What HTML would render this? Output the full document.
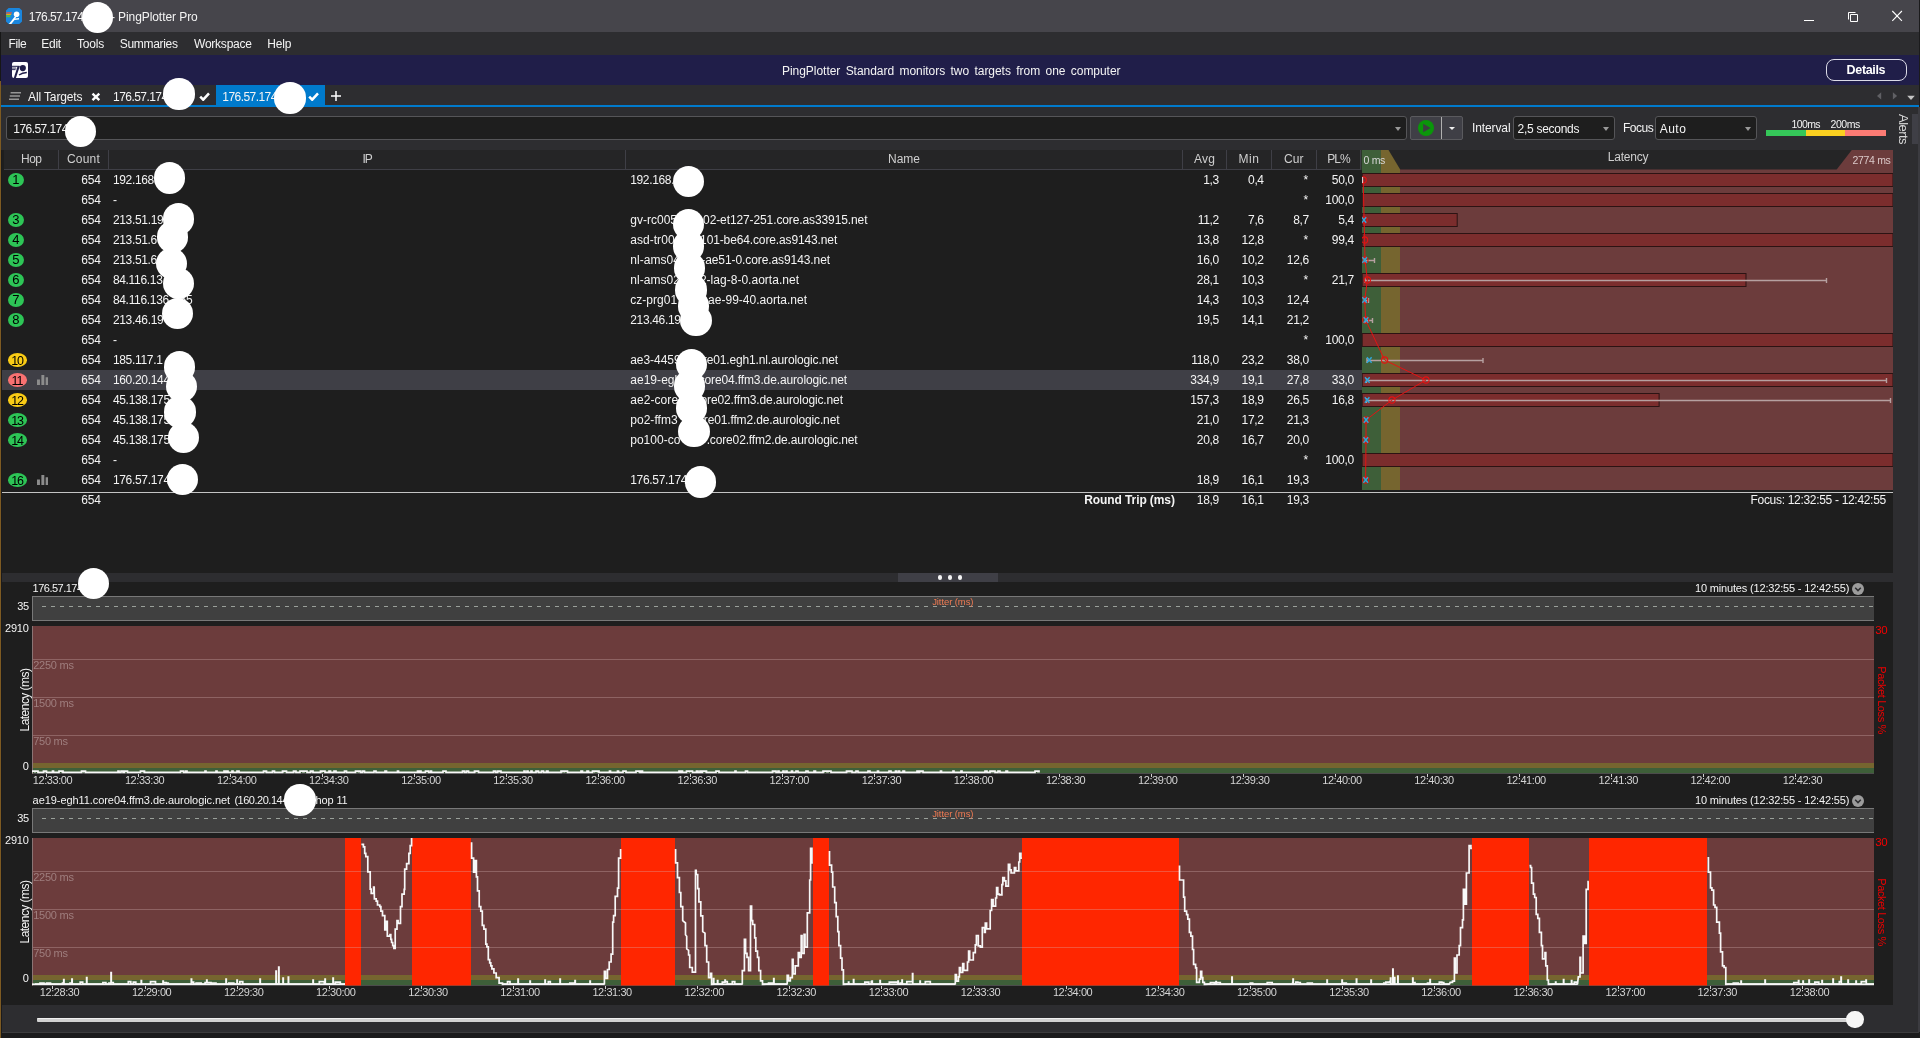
<!DOCTYPE html>
<html><head><meta charset="utf-8"><title>PingPlotter Pro</title>
<style>
*{box-sizing:border-box;margin:0;padding:0}
html,body{width:1920px;height:1038px;overflow:hidden;background:#1e1e1e}
body{font-family:"Liberation Sans",sans-serif;font-size:12px;color:#f4f4f4;position:relative}
.a{position:absolute;white-space:nowrap}
.t{position:absolute;white-space:pre;line-height:14px;height:14px}
.blob{position:absolute;background:#fff;border-radius:50%}
.hop{position:absolute;height:16px;border-radius:8px;color:#000;text-align:center;line-height:16px;font-size:13px}
.hg{background:#2dc556}.hy{background:#facc15}.hr{background:#f87171}
.combo{position:absolute;top:116px;height:24px;background:#1e1e1e;border:1px solid #555558;border-radius:3px}
.arr{position:absolute;width:0;height:0;border-left:3.5px solid transparent;border-right:3.5px solid transparent;border-top:4px solid #999}
</style></head><body><div id="app" style="position:absolute;left:0;top:0;width:1920px;height:1038px;will-change:transform">

<div class="a" style="left:0px;top:0px;width:1919px;height:32px;background:#46454b;"></div>
<div class="a" style="left:1919px;top:0px;width:1px;height:107px;background:#1b1b1c;"></div>
<svg class="a" style="left:6px;top:8px" width="16" height="16" viewBox="0 0 16 16"><path d="M2.6 0h10.8l2.6 2.6v10.8l-2.6 2.6h-10.8l-2.6-2.6v-10.8z" fill="#1a86de"/><rect x="0.2" y="4.3" width="5.7" height="1.2" fill="#f0503c"/><rect x="0.2" y="5.8" width="5" height="1.2" fill="#f5a800"/><rect x="0.2" y="7.3" width="4.3" height="1.9" fill="#4cc24a"/><circle cx="10.6" cy="6.3" r="2.8" fill="#fff"/><path d="M9.2 8 L2.9 15.9 L5.3 15.9 L8.5 12 L13 11.4 L13 10 L9.3 10.4 L10.6 8.6 Z" fill="#fff"/></svg>
<div class="t" style="top:10.3px;left:28.8px;letter-spacing:-0.56px;">176.57.174</div>
<div class="t" style="top:10.3px;left:111.0px;letter-spacing:0.80px;">-</div>
<div class="t" style="top:10.3px;left:118.0px;letter-spacing:-0.07px;">PingPlotter Pro</div>
<svg class="a" style="left:1790px;top:0" width="130" height="32" viewBox="0 0 130 32"><path d="M14 20.5h10" stroke="#fff" stroke-width="1" fill="none"/><path d="M60.5 14.5h7v7h-7z M58.5 19.5v-7h7" stroke="#fff" stroke-width="1" fill="none"/><path d="M102.3 11l9.6 9.8M111.9 11l-9.6 9.8" stroke="#fff" stroke-width="1.1" fill="none"/></svg>
<div class="a" style="left:1px;top:32px;width:1918px;height:23px;background:#2d2d30;"></div>
<div class="t" style="top:36.5px;left:8.6px;letter-spacing:-0.43px;">File</div>
<div class="t" style="top:36.5px;left:41.2px;letter-spacing:-0.22px;">Edit</div>
<div class="t" style="top:36.5px;left:76.9px;letter-spacing:-0.16px;">Tools</div>
<div class="t" style="top:36.5px;left:119.7px;letter-spacing:-0.30px;">Summaries</div>
<div class="t" style="top:36.5px;left:194.0px;letter-spacing:-0.23px;">Workspace</div>
<div class="t" style="top:36.5px;left:267.3px;letter-spacing:-0.17px;">Help</div>
<div class="a" style="left:1px;top:55px;width:1918px;height:30px;background:#201e49;"></div>
<svg class="a" style="left:12px;top:62px" width="16" height="16" viewBox="0 0 16 16"><rect width="16" height="16" rx="2" fill="#fff"/><g fill="#201e49"><rect x="0" y="3.8" width="7.6" height="1"/><rect x="0" y="5.6" width="4.2" height="0.9"/><rect x="0" y="7.2" width="3.6" height="0.9"/><path d="M5.6 4.2h2.2L3.9 16h-2.1z"/><circle cx="10.8" cy="6.1" r="3.1"/><path d="M6.6 12.4Q10 10 14.8 9.7V11.2Q10.6 11.5 7.4 13.6Z"/></g></svg>
<div class="t" style="top:63.7px;left:782.0px;letter-spacing:-0.04px;word-spacing:2.1px;">PingPlotter Standard monitors two targets from one computer</div>
<div class="a" style="left:1825.5px;top:59px;width:81px;height:22px;border:1.6px solid #dcdce8;border-radius:8px"></div>
<div class="t" style="top:62.9px;left:1846.6px;font-size:12.5px;font-weight:bold;color:#fff;letter-spacing:-0.34px;">Details</div>
<div class="a" style="left:1px;top:85px;width:1918px;height:22px;background:#2d2d30;"></div>
<div class="a" style="left:216px;top:85px;width:109px;height:21px;background:#007acc;"></div>
<div class="a" style="left:1px;top:105px;width:1918px;height:2px;background:#007acc;"></div>
<svg class="a" style="left:8px;top:91px" width="14" height="10" viewBox="0 0 14 10"><path d="M2.6 1.7h10.4M1.8 5h10.2M1 8.3h10" stroke="#969696" stroke-width="1.6"/></svg>
<div class="t" style="top:89.5px;left:28.1px;letter-spacing:-0.14px;">All Targets</div>
<svg class="a" style="left:90.5px;top:92px" width="10" height="10" viewBox="0 0 10 10"><path d="M1.5 1.6l6.8 6.6M8.3 1.6l-6.8 6.6" stroke="#fff" stroke-width="2.4"/></svg>
<div class="t" style="top:89.5px;left:113.1px;letter-spacing:-0.56px;">176.57.174</div>
<svg class="a" style="left:198.5px;top:92px" width="11" height="9" viewBox="0 0 11 9"><path d="M1.2 4.6l3 3.1l5.8-6.4" stroke="#fff" stroke-width="2.5" fill="none"/></svg>
<div class="t" style="top:89.5px;left:222.3px;letter-spacing:-0.56px;">176.57.174</div>
<svg class="a" style="left:307.5px;top:92px" width="11" height="9" viewBox="0 0 11 9"><path d="M1.2 4.6l3 3.1l5.8-6.4" stroke="#fff" stroke-width="2.5" fill="none"/></svg>
<svg class="a" style="left:331px;top:90.6px" width="10" height="10" viewBox="0 0 10 10"><path d="M5 0v10M0 5h10" stroke="#fff" stroke-width="1.5"/></svg>
<svg class="a" style="left:1874px;top:90px" width="46" height="12" viewBox="0 0 46 12"><path d="M7.2 2.2v7.4l-4.2-3.7z" fill="#606064"/><path d="M18.9 2.2v7.4l4.2-3.7z" fill="#606064"/><path d="M33.2 5.7h7.6l-3.8 4.3z" fill="#c4c4c4"/></svg>
<div class="a" style="left:1px;top:107px;width:1918px;height:43px;background:#2d2d30;"></div>
<div class="combo" style="left:6px;width:1401px"></div>
<div class="t" style="top:121.5px;left:13.3px;letter-spacing:-0.56px;">176.57.174</div>
<div class="arr" style="left:1395px;top:126.5px"></div>
<div class="a" style="left:1410px;top:116px;width:53px;height:24px;background:#3f3f46;border:1px solid #5a5a5e;border-radius:2px"></div>
<div class="a" style="left:1441px;top:117px;width:1px;height:22px;background:#b0b0b0;"></div>
<svg class="a" style="left:1418px;top:120px" width="16" height="16" viewBox="0 0 16 16"><circle cx="8" cy="8" r="8" fill="#0a960a"/><path d="M5.2 3.8v8.4l7.4-4.2z" fill="#3b3d40"/></svg>
<div class="arr" style="left:1449px;top:126.5px;border-left-width:3px;border-right-width:3px;border-top:3.5px solid #f0f0f0"></div>
<div class="t" style="top:120.7px;left:1471.9px;letter-spacing:-0.09px;">Interval</div>
<div class="combo" style="left:1513px;width:102px"></div>
<div class="t" style="top:121.7px;left:1517.5px;letter-spacing:-0.27px;">2,5 seconds</div>
<div class="arr" style="left:1603px;top:126.5px"></div>
<div class="t" style="top:120.7px;left:1623.0px;letter-spacing:-0.50px;">Focus</div>
<div class="combo" style="left:1655px;width:102px"></div>
<div class="t" style="top:121.7px;left:1659.8px;letter-spacing:0.45px;">Auto</div>
<div class="arr" style="left:1745px;top:126.5px"></div>
<div class="t" style="top:116.6px;left:1791.5px;font-size:10.5px;letter-spacing:-0.62px;">100ms</div>
<div class="t" style="top:116.6px;left:1830.6px;font-size:10.5px;letter-spacing:-0.46px;">200ms</div>
<div class="a" style="left:1765.5px;top:129.5px;width:40px;height:6px;background:#35c759;"></div>
<div class="a" style="left:1805.5px;top:129.5px;width:39.5px;height:6px;background:#fbd020;"></div>
<div class="a" style="left:1845px;top:129.5px;width:40.7px;height:6px;background:#fc7b74;"></div>
<div class="a" style="left:1893px;top:107px;width:26px;height:931px;background:#2d2d30;"></div>
<div class="a" style="left:1918px;top:107px;width:2px;height:925px;background:#3b3b40;"></div>
<div class="a" style="left:1912px;top:114.3px;width:5.8px;height:29.7px;background:#3f3f46;"></div>
<div class="t" style="top:-6.9px;left:0.0px;font-size:13px;color:#d8d8d8;letter-spacing:-0.54px;top:122px;left:1888px;width:30px;transform:rotate(90deg);transform-origin:50% 50%;">Alerts</div>
<div class="a" style="left:0px;top:32px;width:1px;height:49px;background:#161616;"></div>
<div class="a" style="left:0px;top:81px;width:1px;height:957px;background:#7d5a22;"></div>
<div class="a" style="left:1px;top:150px;width:1px;height:888px;background:#1b1b1c;"></div>
<div class="a" style="left:2px;top:150px;width:1891px;height:424px;background:#1e1e1e;"></div>
<div class="a" style="left:4px;top:150px;width:1357px;height:20px;background:#252526;"></div>
<div class="a" style="left:4px;top:169px;width:1357px;height:1px;background:#3f3f46;"></div>
<div class="a" style="left:1361px;top:150px;width:532px;height:20px;background:#252526;"></div>
<div class="a" style="left:58px;top:150px;width:1px;height:19px;background:#3f3f46;"></div>
<div class="t" style="top:152.0px;left:21.0px;color:#cfcfcf;letter-spacing:-0.50px;">Hop</div>
<div class="a" style="left:108px;top:150px;width:1px;height:19px;background:#3f3f46;"></div>
<div class="t" style="top:152.0px;left:67.0px;color:#cfcfcf;letter-spacing:0.20px;">Count</div>
<div class="a" style="left:625px;top:150px;width:1px;height:19px;background:#3f3f46;"></div>
<div class="t" style="top:152.0px;left:362.5px;color:#cfcfcf;letter-spacing:-1.17px;">IP</div>
<div class="a" style="left:1182px;top:150px;width:1px;height:19px;background:#3f3f46;"></div>
<div class="t" style="top:152.0px;left:888.0px;color:#cfcfcf;">Name</div>
<div class="a" style="left:1226px;top:150px;width:1px;height:19px;background:#3f3f46;"></div>
<div class="t" style="top:152.0px;left:1194.0px;color:#cfcfcf;letter-spacing:0.18px;">Avg</div>
<div class="a" style="left:1271px;top:150px;width:1px;height:19px;background:#3f3f46;"></div>
<div class="t" style="top:152.0px;left:1238.5px;color:#cfcfcf;letter-spacing:0.55px;">Min</div>
<div class="a" style="left:1316px;top:150px;width:1px;height:19px;background:#3f3f46;"></div>
<div class="t" style="top:152.0px;left:1284.0px;color:#cfcfcf;letter-spacing:0.05px;">Cur</div>
<div class="a" style="left:1360px;top:150px;width:1px;height:19px;background:#3f3f46;"></div>
<div class="t" style="top:152.0px;left:1327.2px;color:#cfcfcf;letter-spacing:-0.95px;">PL%</div>
<div class="t" style="top:150.3px;left:1607.8px;color:#cfcfcf;letter-spacing:-0.22px;">Latency</div>
<div class="a" style="left:1361.7px;top:169.5px;width:531.3px;height:320.3px;background:#6c3c3c;"></div>
<div class="a" style="left:1361.7px;top:169.5px;width:19.2px;height:320.3px;background:#3e5f39;"></div>
<div class="a" style="left:1380.9px;top:169.5px;width:19.3px;height:320.3px;background:#76652f;"></div>
<svg class="a" style="left:1361px;top:150px" width="532" height="20" viewBox="0 0 532 20"><path d="M0.7 0h19.2v20h-19.2z" fill="#3e5f39"/><path d="M19.9 0h7.6l11.7 19.5v0.5h-19.3z" fill="#76652f"/><path d="M490.8 0h41.2v20h-56.3v-0.5z" fill="#6c3c3c"/><path d="M39 19.5h440v0.5h-440z" fill="#6c3c3c"/></svg>
<div class="t" style="top:153.1px;left:1363.6px;font-size:10.5px;color:#d8d8d8;letter-spacing:-0.34px;">0 ms</div>
<div class="t" style="top:152.8px;left:1852.5px;font-size:10.5px;color:#dccaca;letter-spacing:-0.32px;">2774 ms</div>
<div class="hop hg" style="left:7.9px;top:173.1px;width:15.9px;height:13.8px;line-height:14.2px;border-radius:50%">1</div>
<div class="t" style="top:172.7px;left:81.3px;letter-spacing:-0.20px;">654</div>
<div class="t" style="top:172.7px;left:112.9px;letter-spacing:-0.34px;">192.168.</div>
<div class="t" style="top:172.7px;left:630.2px;letter-spacing:-0.34px;">192.168.</div>
<div class="t" style="top:172.7px;left:1203.3px;letter-spacing:-0.38px;">1,3</div>
<div class="t" style="top:172.7px;left:1248.1px;letter-spacing:-0.38px;">0,4</div>
<div class="t" style="top:172.7px;left:1303.6px;">*</div>
<div class="t" style="top:172.7px;left:1331.8px;letter-spacing:-0.34px;">50,0</div>
<div class="t" style="top:192.7px;left:81.3px;letter-spacing:-0.20px;">654</div>
<div class="t" style="top:192.7px;left:112.9px;letter-spacing:0.80px;">-</div>
<div class="t" style="top:192.7px;left:1303.6px;">*</div>
<div class="t" style="top:192.7px;left:1325.3px;letter-spacing:-0.31px;">100,0</div>
<div class="hop hg" style="left:7.9px;top:213.1px;width:15.9px;height:13.8px;line-height:14.2px;border-radius:50%">3</div>
<div class="t" style="top:212.7px;left:81.3px;letter-spacing:-0.20px;">654</div>
<div class="t" style="top:212.7px;left:112.9px;letter-spacing:-0.32px;">213.51.19</div>
<div class="t" style="top:212.7px;left:630.2px;letter-spacing:0.02px;">gv-rc005</div>
<div class="t" style="top:212.7px;left:703.1px;letter-spacing:-0.11px;">02-et127-251.core.as33915.net</div>
<div class="t" style="top:212.7px;left:1197.7px;letter-spacing:-0.34px;">11,2</div>
<div class="t" style="top:212.7px;left:1248.1px;letter-spacing:-0.38px;">7,6</div>
<div class="t" style="top:212.7px;left:1293.3px;letter-spacing:-0.38px;">8,7</div>
<div class="t" style="top:212.7px;left:1338.3px;letter-spacing:-0.38px;">5,4</div>
<div class="hop hg" style="left:7.9px;top:233.1px;width:15.9px;height:13.8px;line-height:14.2px;border-radius:50%">4</div>
<div class="t" style="top:232.7px;left:81.3px;letter-spacing:-0.20px;">654</div>
<div class="t" style="top:232.7px;left:112.9px;letter-spacing:-0.34px;">213.51.6</div>
<div class="t" style="top:232.7px;left:630.2px;letter-spacing:0.05px;">asd-tr00</div>
<div class="t" style="top:232.7px;left:700.1px;letter-spacing:-0.13px;">101-be64.core.as9143.net</div>
<div class="t" style="top:232.7px;left:1196.8px;letter-spacing:-0.34px;">13,8</div>
<div class="t" style="top:232.7px;left:1241.6px;letter-spacing:-0.34px;">12,8</div>
<div class="t" style="top:232.7px;left:1303.6px;">*</div>
<div class="t" style="top:232.7px;left:1331.8px;letter-spacing:-0.34px;">99,4</div>
<div class="hop hg" style="left:7.9px;top:253.1px;width:15.9px;height:13.8px;line-height:14.2px;border-radius:50%">5</div>
<div class="t" style="top:252.7px;left:81.3px;letter-spacing:-0.20px;">654</div>
<div class="t" style="top:252.7px;left:112.9px;letter-spacing:-0.34px;">213.51.6</div>
<div class="t" style="top:252.7px;left:630.2px;letter-spacing:0.05px;">nl-ams04</div>
<div class="t" style="top:252.7px;left:701.3px;letter-spacing:-0.09px;">-ae51-0.core.as9143.net</div>
<div class="t" style="top:252.7px;left:1196.8px;letter-spacing:-0.34px;">16,0</div>
<div class="t" style="top:252.7px;left:1241.6px;letter-spacing:-0.34px;">10,2</div>
<div class="t" style="top:252.7px;left:1286.8px;letter-spacing:-0.34px;">12,6</div>
<div class="hop hg" style="left:7.9px;top:273.1px;width:15.9px;height:13.8px;line-height:14.2px;border-radius:50%">6</div>
<div class="t" style="top:272.7px;left:81.3px;letter-spacing:-0.20px;">654</div>
<div class="t" style="top:272.7px;left:112.9px;letter-spacing:-0.32px;">84.116.13</div>
<div class="t" style="top:272.7px;left:630.2px;letter-spacing:0.05px;">nl-ams02</div>
<div class="t" style="top:272.7px;left:699.9px;letter-spacing:0.02px;">2-lag-8-0.aorta.net</div>
<div class="t" style="top:272.7px;left:1196.8px;letter-spacing:-0.34px;">28,1</div>
<div class="t" style="top:272.7px;left:1241.6px;letter-spacing:-0.34px;">10,3</div>
<div class="t" style="top:272.7px;left:1303.6px;">*</div>
<div class="t" style="top:272.7px;left:1331.8px;letter-spacing:-0.34px;">21,7</div>
<div class="hop hg" style="left:7.9px;top:293.1px;width:15.9px;height:13.8px;line-height:14.2px;border-radius:50%">7</div>
<div class="t" style="top:292.7px;left:81.3px;letter-spacing:-0.20px;">654</div>
<div class="t" style="top:292.7px;left:112.9px;letter-spacing:-0.31px;">84.116.136</div>
<div class="t" style="top:292.7px;left:179.6px;letter-spacing:-0.20px;">55</div>
<div class="t" style="top:292.7px;left:630.2px;letter-spacing:0.05px;">cz-prg01</div>
<div class="t" style="top:292.7px;left:704.1px;letter-spacing:0.01px;">-ae-99-40.aorta.net</div>
<div class="t" style="top:292.7px;left:1196.8px;letter-spacing:-0.34px;">14,3</div>
<div class="t" style="top:292.7px;left:1241.6px;letter-spacing:-0.34px;">10,3</div>
<div class="t" style="top:292.7px;left:1286.8px;letter-spacing:-0.34px;">12,4</div>
<div class="hop hg" style="left:7.9px;top:313.1px;width:15.9px;height:13.8px;line-height:14.2px;border-radius:50%">8</div>
<div class="t" style="top:312.7px;left:81.3px;letter-spacing:-0.20px;">654</div>
<div class="t" style="top:312.7px;left:112.9px;letter-spacing:-0.32px;">213.46.19</div>
<div class="t" style="top:312.7px;left:630.2px;letter-spacing:-0.32px;">213.46.19</div>
<div class="t" style="top:312.7px;left:1196.8px;letter-spacing:-0.34px;">19,5</div>
<div class="t" style="top:312.7px;left:1241.6px;letter-spacing:-0.34px;">14,1</div>
<div class="t" style="top:312.7px;left:1286.8px;letter-spacing:-0.34px;">21,2</div>
<div class="t" style="top:332.7px;left:81.3px;letter-spacing:-0.20px;">654</div>
<div class="t" style="top:332.7px;left:112.9px;letter-spacing:0.80px;">-</div>
<div class="t" style="top:332.7px;left:1303.6px;">*</div>
<div class="t" style="top:332.7px;left:1325.3px;letter-spacing:-0.31px;">100,0</div>
<div class="hop hy" style="left:7.9px;top:353.1px;width:19.3px;height:13.8px;line-height:17.4px;border-radius:50%;font-size:12.5px;letter-spacing:-1.1px;text-indent:-1.1px">10</div>
<div class="t" style="top:352.7px;left:81.3px;letter-spacing:-0.20px;">654</div>
<div class="t" style="top:352.7px;left:112.9px;letter-spacing:-0.32px;">185.117.1</div>
<div class="t" style="top:352.7px;left:630.2px;letter-spacing:-0.03px;">ae3-4459</div>
<div class="t" style="top:352.7px;left:702.8px;letter-spacing:-0.14px;">re01.egh1.nl.aurologic.net</div>
<div class="t" style="top:352.7px;left:1191.2px;letter-spacing:-0.31px;">118,0</div>
<div class="t" style="top:352.7px;left:1241.6px;letter-spacing:-0.34px;">23,2</div>
<div class="t" style="top:352.7px;left:1286.8px;letter-spacing:-0.34px;">38,0</div>
<div class="a" style="left:2px;top:370px;width:1359.5px;height:20px;background:#3f3f46;"></div>
<div class="hop hr" style="left:7.9px;top:373.1px;width:19.3px;height:13.8px;line-height:17.4px;border-radius:50%;font-size:12.5px;letter-spacing:-1.1px;text-indent:-1.1px">11</div>
<svg class="a" style="left:36.8px;top:374.6px" width="11.6" height="10.2" viewBox="0 0 11.4 10"><path d="M0 4.4h2.9v5.6h-2.9zM4.3 0h2.9v10h-2.9zM8.5 2.2h2.9v7.8h-2.9z" fill="#8c8c8c"/></svg>
<div class="t" style="top:372.7px;left:81.3px;letter-spacing:-0.20px;">654</div>
<div class="t" style="top:372.7px;left:112.9px;letter-spacing:-0.31px;">160.20.144</div>
<div class="t" style="top:372.7px;left:630.2px;letter-spacing:0.05px;">ae19-egh</div>
<div class="t" style="top:372.7px;left:698.7px;letter-spacing:-0.13px;">core04.ffm3.de.aurologic.net</div>
<div class="t" style="top:372.7px;left:1190.3px;letter-spacing:-0.31px;">334,9</div>
<div class="t" style="top:372.7px;left:1241.6px;letter-spacing:-0.34px;">19,1</div>
<div class="t" style="top:372.7px;left:1286.8px;letter-spacing:-0.34px;">27,8</div>
<div class="t" style="top:372.7px;left:1331.8px;letter-spacing:-0.34px;">33,0</div>
<div class="hop hy" style="left:7.9px;top:393.1px;width:19.3px;height:13.8px;line-height:17.4px;border-radius:50%;font-size:12.5px;letter-spacing:-1.1px;text-indent:-1.1px">12</div>
<div class="t" style="top:392.7px;left:81.3px;letter-spacing:-0.20px;">654</div>
<div class="t" style="top:392.7px;left:112.9px;letter-spacing:-0.31px;">45.138.175</div>
<div class="t" style="top:392.7px;left:630.2px;letter-spacing:0.08px;">ae2-core</div>
<div class="t" style="top:392.7px;left:700.5px;letter-spacing:-0.13px;">ore02.ffm3.de.aurologic.net</div>
<div class="t" style="top:392.7px;left:1190.3px;letter-spacing:-0.31px;">157,3</div>
<div class="t" style="top:392.7px;left:1241.6px;letter-spacing:-0.34px;">18,9</div>
<div class="t" style="top:392.7px;left:1286.8px;letter-spacing:-0.34px;">26,5</div>
<div class="t" style="top:392.7px;left:1331.8px;letter-spacing:-0.34px;">16,8</div>
<div class="hop hg" style="left:7.9px;top:413.1px;width:19.3px;height:13.8px;line-height:17.4px;border-radius:50%;font-size:12.5px;letter-spacing:-1.1px;text-indent:-1.1px">13</div>
<div class="t" style="top:412.7px;left:81.3px;letter-spacing:-0.20px;">654</div>
<div class="t" style="top:412.7px;left:112.9px;letter-spacing:-0.31px;">45.138.175</div>
<div class="t" style="top:412.7px;left:630.2px;letter-spacing:0.05px;">po2-ffm3</div>
<div class="t" style="top:412.7px;left:703.8px;letter-spacing:-0.14px;">re01.ffm2.de.aurologic.net</div>
<div class="t" style="top:412.7px;left:1196.8px;letter-spacing:-0.34px;">21,0</div>
<div class="t" style="top:412.7px;left:1241.6px;letter-spacing:-0.34px;">17,2</div>
<div class="t" style="top:412.7px;left:1286.8px;letter-spacing:-0.34px;">21,3</div>
<div class="hop hg" style="left:7.9px;top:433.1px;width:19.3px;height:13.8px;line-height:17.4px;border-radius:50%;font-size:12.5px;letter-spacing:-1.1px;text-indent:-1.1px">14</div>
<div class="t" style="top:432.7px;left:81.3px;letter-spacing:-0.20px;">654</div>
<div class="t" style="top:432.7px;left:112.9px;letter-spacing:-0.31px;">45.138.175</div>
<div class="t" style="top:432.7px;left:630.2px;letter-spacing:0.02px;">po100-co</div>
<div class="t" style="top:432.7px;left:706.7px;letter-spacing:-0.15px;">.core02.ffm2.de.aurologic.net</div>
<div class="t" style="top:432.7px;left:1196.8px;letter-spacing:-0.34px;">20,8</div>
<div class="t" style="top:432.7px;left:1241.6px;letter-spacing:-0.34px;">16,7</div>
<div class="t" style="top:432.7px;left:1286.8px;letter-spacing:-0.34px;">20,0</div>
<div class="t" style="top:452.7px;left:81.3px;letter-spacing:-0.20px;">654</div>
<div class="t" style="top:452.7px;left:112.9px;letter-spacing:0.80px;">-</div>
<div class="t" style="top:452.7px;left:1303.6px;">*</div>
<div class="t" style="top:452.7px;left:1325.3px;letter-spacing:-0.31px;">100,0</div>
<div class="hop hg" style="left:7.9px;top:473.1px;width:19.3px;height:13.8px;line-height:17.4px;border-radius:50%;font-size:12.5px;letter-spacing:-1.1px;text-indent:-1.1px">16</div>
<svg class="a" style="left:36.8px;top:474.6px" width="11.6" height="10.2" viewBox="0 0 11.4 10"><path d="M0 4.4h2.9v5.6h-2.9zM4.3 0h2.9v10h-2.9zM8.5 2.2h2.9v7.8h-2.9z" fill="#8c8c8c"/></svg>
<div class="t" style="top:472.7px;left:81.3px;letter-spacing:-0.20px;">654</div>
<div class="t" style="top:472.7px;left:112.9px;letter-spacing:-0.31px;">176.57.174</div>
<div class="t" style="top:472.7px;left:630.2px;letter-spacing:-0.31px;">176.57.174</div>
<div class="t" style="top:472.7px;left:1196.8px;letter-spacing:-0.34px;">18,9</div>
<div class="t" style="top:472.7px;left:1241.6px;letter-spacing:-0.34px;">16,1</div>
<div class="t" style="top:472.7px;left:1286.8px;letter-spacing:-0.34px;">19,3</div>
<div class="a" style="left:2px;top:492px;width:1891px;height:1px;background:#c4c4c4;"></div>
<div class="t" style="top:492.7px;left:81.3px;letter-spacing:-0.20px;">654</div>
<div class="t" style="top:492.7px;left:1084.3px;font-weight:bold;letter-spacing:-0.10px;">Round Trip (ms)</div>
<div class="t" style="top:492.7px;left:1196.8px;letter-spacing:-0.34px;">18,9</div>
<div class="t" style="top:492.7px;left:1241.6px;letter-spacing:-0.34px;">16,1</div>
<div class="t" style="top:492.7px;left:1286.8px;letter-spacing:-0.34px;">19,3</div>
<div class="t" style="top:492.7px;left:1750.5px;letter-spacing:-0.31px;">Focus: 12:32:55 - 12:42:55</div>
<svg class="a" style="left:1362px;top:169px" width="531" height="323" viewBox="1 0 531 323"><rect x="1.2" y="4.5" width="530.8" height="13" fill="#7b2d2d" stroke="#2c1313" stroke-width="1"/><rect x="1.2" y="24.5" width="530.8" height="13" fill="#7b2d2d" stroke="#2c1313" stroke-width="1"/><rect x="1.2" y="44.5" width="95.0" height="13" fill="#7b2d2d" stroke="#2c1313" stroke-width="1"/><rect x="1.2" y="64.5" width="530.8" height="13" fill="#7b2d2d" stroke="#2c1313" stroke-width="1"/><rect x="1.2" y="104.5" width="383.8" height="13" fill="#7b2d2d" stroke="#2c1313" stroke-width="1"/><rect x="1.2" y="164.5" width="530.8" height="13" fill="#7b2d2d" stroke="#2c1313" stroke-width="1"/><rect x="1.2" y="204.5" width="530.8" height="13" fill="#7b2d2d" stroke="#2c1313" stroke-width="1"/><rect x="1.2" y="224.5" width="296.9" height="13" fill="#7b2d2d" stroke="#2c1313" stroke-width="1"/><rect x="1.2" y="284.5" width="530.8" height="13" fill="#7b2d2d" stroke="#2c1313" stroke-width="1"/><path d="M4.0 91.5H13.5M4.0 89v5M13.5 89v5" stroke="#b6a0a0" stroke-width="1.4" fill="none"/><path d="M4.0 111.5H465.5M4.0 109v5M465.5 109v5" stroke="#b6a0a0" stroke-width="1.4" fill="none"/><path d="M4.0 131.5H7.5M4.0 129v5M7.5 129v5" stroke="#b6a0a0" stroke-width="1.4" fill="none"/><path d="M4.5 151.5H11.5M4.5 149v5M11.5 149v5" stroke="#b6a0a0" stroke-width="1.4" fill="none"/><path d="M6.0 191.5H122.0M6.0 189v5M122.0 189v5" stroke="#b6a0a0" stroke-width="1.4" fill="none"/><path d="M5.5 211.5H525.5M5.5 209v5M525.5 209v5" stroke="#b6a0a0" stroke-width="1.4" fill="none"/><path d="M5.5 231.5H529.5M5.5 229v5M529.5 229v5" stroke="#b6a0a0" stroke-width="1.4" fill="none"/><polyline points="2.2000000000000455,11.0 3.099999999999909,51.0 3.599999999999909,71.0 4,91.0 6.400000000000091,111.0 3.7000000000000455,131.0 4.7000000000000455,151.0 23.59999999999991,191.0 65,211.0 31,231.0 5,251.0 5,271.0 4.599999999999909,311.0" fill="none" stroke="#e41212" stroke-width="1"/><circle cx="2.2000000000000455" cy="11" r="3.1" fill="none" stroke="#e41212" stroke-width="1.1"/><circle cx="3.099999999999909" cy="51" r="3.1" fill="none" stroke="#e41212" stroke-width="1.1"/><circle cx="3.599999999999909" cy="71" r="3.1" fill="none" stroke="#e41212" stroke-width="1.1"/><circle cx="4" cy="91" r="3.1" fill="none" stroke="#e41212" stroke-width="1.1"/><circle cx="6.400000000000091" cy="111" r="3.1" fill="none" stroke="#e41212" stroke-width="1.1"/><circle cx="3.7000000000000455" cy="131" r="3.1" fill="none" stroke="#e41212" stroke-width="1.1"/><circle cx="4.7000000000000455" cy="151" r="3.1" fill="none" stroke="#e41212" stroke-width="1.1"/><circle cx="23.59999999999991" cy="191" r="3.1" fill="none" stroke="#e41212" stroke-width="1.1"/><circle cx="65" cy="211" r="3.1" fill="none" stroke="#e41212" stroke-width="1.1"/><circle cx="31" cy="231" r="3.1" fill="none" stroke="#e41212" stroke-width="1.1"/><circle cx="5" cy="251" r="3.1" fill="none" stroke="#e41212" stroke-width="1.1"/><circle cx="5" cy="271" r="3.1" fill="none" stroke="#e41212" stroke-width="1.1"/><circle cx="4.599999999999909" cy="311" r="3.1" fill="none" stroke="#e41212" stroke-width="1.1"/><path d="M0.6 48.2l4.6 5.6M5.2 48.2l-4.6 5.6" stroke="#2fa8dc" stroke-width="1.4" fill="none"/><path d="M1.3 88.2l4.6 5.6M5.9 88.2l-4.6 5.6" stroke="#2fa8dc" stroke-width="1.4" fill="none"/><path d="M1.3 128.2l4.6 5.6M5.9 128.2l-4.6 5.6" stroke="#2fa8dc" stroke-width="1.4" fill="none"/><path d="M2.7 148.2l4.6 5.6M7.3 148.2l-4.6 5.6" stroke="#2fa8dc" stroke-width="1.4" fill="none"/><path d="M6.0 188.2l4.6 5.6M10.6 188.2l-4.6 5.6" stroke="#2fa8dc" stroke-width="1.4" fill="none"/><path d="M4.0 208.2l4.6 5.6M8.6 208.2l-4.6 5.6" stroke="#2fa8dc" stroke-width="1.4" fill="none"/><path d="M3.8 228.2l4.6 5.6M8.4 228.2l-4.6 5.6" stroke="#2fa8dc" stroke-width="1.4" fill="none"/><path d="M2.8 248.2l4.6 5.6M7.4 248.2l-4.6 5.6" stroke="#2fa8dc" stroke-width="1.4" fill="none"/><path d="M2.5 268.2l4.6 5.6M7.1 268.2l-4.6 5.6" stroke="#2fa8dc" stroke-width="1.4" fill="none"/><path d="M2.4 308.2l4.6 5.6M7.0 308.2l-4.6 5.6" stroke="#2fa8dc" stroke-width="1.4" fill="none"/><path d="M1.6 8v6" stroke="#e8e0e0" stroke-width="1"/></svg>
<div class="a" style="left:2px;top:573px;width:1891px;height:9.2px;background:#2d2d30;"></div>
<div class="a" style="left:898px;top:573px;width:100px;height:9.2px;background:#3f3f46;"></div>
<div class="a" style="left:937.6999999999999px;top:575.4px;width:4.2px;height:4.2px;background:#f4f4f4;border-radius:50%;"></div>
<div class="a" style="left:947.6999999999999px;top:575.4px;width:4.2px;height:4.2px;background:#f4f4f4;border-radius:50%;"></div>
<div class="a" style="left:957.6999999999999px;top:575.4px;width:4.2px;height:4.2px;background:#f4f4f4;border-radius:50%;"></div>
<div class="a" style="left:4px;top:582.5px;width:1889px;height:211.5px;background:#1e1e1e;"></div>
<div class="t" style="top:581.4px;left:32.6px;font-size:11px;letter-spacing:-0.51px;">176.57.174</div>
<div class="t" style="top:581.4px;left:1695.0px;font-size:11px;letter-spacing:-0.17px;">10 minutes (12:32:55 - 12:42:55)</div>
<svg class="a" style="left:1852px;top:582.5px" width="12" height="12" viewBox="0 0 12 12"><circle cx="6" cy="6" r="6" fill="#9c9c9c"/><path d="M3.2 4.8l2.8 2.8l2.8-2.8" stroke="#2d2d30" stroke-width="1.5" fill="none"/></svg>
<div class="a" style="left:32px;top:596px;width:1842px;height:25px;background:#404040;border-top:1px solid #787878;border-bottom:1px solid #787878;border-left:1px solid #787878"></div>
<svg class="a" style="left:32px;top:606px" width="1842" height="1"><path d="M10 0.5H1842" stroke="#9aa09a" stroke-width="1" stroke-dasharray="4 5"/></svg>
<div class="t" style="top:594.8px;left:932.2px;font-size:9.5px;color:#f07a52;letter-spacing:-0.09px;">Jitter (ms)</div>
<div class="t" style="top:599.3px;left:17.3px;font-size:11px;letter-spacing:-0.47px;">35</div>
<div class="t" style="top:621.3px;left:5.0px;font-size:11px;letter-spacing:-0.22px;">2910</div>
<div class="t" style="top:759.3px;left:22.7px;font-size:11px;letter-spacing:-0.19px;">0</div>
<div class="t" style="top:-6.9px;left:0.0px;letter-spacing:-0.53px;left:-7.2px;width:63px;top:692.5px;transform:rotate(-90deg);">Latency (ms)</div>
<div class="t" style="top:623.2px;left:1875.3px;font-size:11.5px;color:#f60000;letter-spacing:-0.40px;">30</div>
<div class="t" style="top:-6.9px;left:0.0px;font-size:11px;color:#f00000;letter-spacing:-0.40px;left:1847.5px;width:67.5px;top:692.8px;transform:rotate(90deg);">Packet Loss %</div>
<div class="a" style="left:32px;top:626px;width:1842px;height:147.5px;background:#6c3c3c;"></div>
<div class="a" style="left:32px;top:763px;width:1842px;height:5px;background:#76652f;"></div>
<div class="a" style="left:32px;top:768px;width:1842px;height:5.4px;background:#3e5f39;"></div>
<div class="a" style="left:32px;top:773.4px;width:1842px;height:1px;background:#4c4c4c;"></div>
<div class="a" style="left:32px;top:626px;width:1px;height:147.5px;background:#8a7474;"></div>
<div class="t" style="top:657.7px;left:33.2px;font-size:11px;color:#9f7e7e;letter-spacing:-0.24px;">2250 ms</div>
<div class="t" style="top:695.7px;left:33.2px;font-size:11px;color:#9f7e7e;letter-spacing:-0.24px;">1500 ms</div>
<div class="t" style="top:733.7px;left:33.2px;font-size:11px;color:#9f7e7e;letter-spacing:-0.26px;">750 ms</div>
<svg class="a" style="left:32px;top:626px" width="1842" height="148" viewBox="0 0 1842 148"><rect x="1" y="33" width="1841" height="1" fill="#d8b8b8" fill-opacity="0.32"/><rect x="1" y="71" width="1841" height="1" fill="#d8b8b8" fill-opacity="0.32"/><rect x="1" y="109" width="1841" height="1" fill="#d8b8b8" fill-opacity="0.32"/><path d="M0.0 146.4 0.0 145.1 3.0 145.1 3.0 146.4 3.0 146.4 3.0 145.1 6.0 145.1 6.0 146.4 6.0 146.4 7.5 146.4 7.5 146.4 11.5 146.4 11.5 146.4 11.5 145.1 12.5 145.1 12.5 146.4 12.5 146.4 12.5 145.1 14.5 145.1 14.5 146.4 14.5 146.4 18.5 146.4 18.5 146.4 20.5 146.4 20.5 146.4 20.5 145.1 21.5 145.1 21.5 146.4 21.5 146.4 25.5 146.4 25.5 146.4 27.0 146.4 27.0 146.4 27.0 145.1 30.0 145.1 30.0 146.4 30.0 146.4 30.0 145.1 31.0 145.1 31.0 146.4 31.0 146.4 34.0 146.4 34.0 146.4 38.0 146.4 38.0 146.4 42.0 146.4 42.0 146.4 46.0 146.4 46.0 146.4 48.0 146.4 48.0 146.4 49.5 146.4 49.5 146.4 49.5 145.1 51.5 145.1 51.5 146.4 51.5 146.4 51.5 145.1 53.5 145.1 53.5 146.4 53.5 146.4 56.5 146.4 56.5 146.4 60.5 146.4 60.5 146.4 64.5 146.4 64.5 146.4 67.5 146.4 67.5 146.4 69.0 146.4 69.0 146.4 71.0 146.4 71.0 146.4 74.0 146.4 74.0 146.4 75.5 146.4 75.5 146.4 77.5 146.4 77.5 146.4 80.5 146.4 80.5 146.4 82.0 146.4 82.0 146.4 86.0 146.4 86.0 146.4 86.0 145.1 87.0 145.1 87.0 146.4 87.0 146.4 89.0 146.4 89.0 146.4 89.0 145.1 91.0 145.1 91.0 146.4 91.0 146.4 92.5 146.4 92.5 146.4 92.5 145.1 95.5 145.1 95.5 146.4 95.5 146.4 99.5 146.4 99.5 146.4 102.5 146.4 102.5 146.4 105.5 146.4 105.5 146.4 107.0 146.4 107.0 146.4 108.5 146.4 108.5 146.4 108.5 145.1 111.5 145.1 111.5 146.4 111.5 146.4 111.5 145.1 112.5 145.1 112.5 146.4 112.5 146.4 115.5 146.4 115.5 146.4 117.5 146.4 117.5 146.4 120.5 146.4 120.5 146.4 122.5 146.4 122.5 146.4 126.5 146.4 126.5 146.4 130.5 146.4 130.5 146.4 132.0 146.4 132.0 146.4 135.0 146.4 135.0 146.4 137.0 146.4 137.0 146.4 141.0 146.4 141.0 146.4 144.0 146.4 144.0 146.4 145.5 146.4 145.5 146.4 148.5 146.4 148.5 146.4 148.5 145.1 151.5 145.1 151.5 146.4 151.5 146.4 153.5 146.4 153.5 146.4 153.5 145.1 155.0 145.1 155.0 146.4 155.0 146.4 158.0 146.4 158.0 146.4 161.0 146.4 161.0 146.4 162.5 146.4 162.5 146.4 164.0 146.4 164.0 146.4 167.0 146.4 167.0 146.4 170.0 146.4 170.0 146.4 173.0 146.4 173.0 146.4 173.0 145.1 174.0 145.1 174.0 146.4 174.0 146.4 177.0 146.4 177.0 146.4 180.0 146.4 180.0 146.4 184.0 146.4 184.0 146.4 184.0 145.1 185.0 145.1 185.0 146.4 185.0 146.4 187.0 146.4 187.0 146.4 189.0 146.4 189.0 146.4 192.0 146.4 192.0 146.4 192.0 145.1 193.0 145.1 193.0 146.4 193.0 146.4 194.5 146.4 194.5 146.4 194.5 145.1 196.0 145.1 196.0 146.4 196.0 146.4 198.0 146.4 198.0 146.4 200.0 146.4 200.0 146.4 200.0 145.1 201.0 145.1 201.0 146.4 201.0 146.4 205.0 146.4 205.0 146.4 205.0 145.1 206.0 145.1 206.0 146.4 206.0 146.4 206.0 145.1 207.0 145.1 207.0 146.4 207.0 146.4 209.0 146.4 209.0 146.4 212.0 146.4 212.0 146.4 213.5 146.4 213.5 146.4 216.5 146.4 216.5 146.4 220.5 146.4 220.5 146.4 223.5 146.4 223.5 146.4 227.5 146.4 227.5 146.4 231.5 146.4 231.5 146.4 231.5 145.1 233.5 145.1 233.5 146.4 233.5 146.4 233.5 145.1 234.5 145.1 234.5 146.4 234.5 146.4 238.5 146.4 238.5 146.4 240.5 146.4 240.5 146.4 240.5 145.1 242.5 145.1 242.5 146.4 242.5 146.4 245.5 146.4 245.5 146.4 247.5 146.4 247.5 146.4 250.5 146.4 250.5 146.4 250.5 145.1 251.5 145.1 251.5 146.4 251.5 146.4 251.5 145.1 254.5 145.1 254.5 146.4 254.5 146.4 258.5 146.4 258.5 146.4 260.0 146.4 260.0 146.4 261.5 146.4 261.5 146.4 261.5 145.1 263.0 145.1 263.0 146.4 263.0 146.4 263.0 145.1 264.0 145.1 264.0 146.4 264.0 146.4 268.0 146.4 268.0 146.4 268.0 145.1 271.0 145.1 271.0 146.4 271.0 146.4 271.0 145.1 272.0 145.1 272.0 146.4 272.0 146.4 272.0 145.1 275.0 145.1 275.0 146.4 275.0 146.4 276.5 146.4 276.5 146.4 278.5 146.4 278.5 146.4 278.5 145.1 279.5 145.1 279.5 146.4 279.5 146.4 279.5 145.1 281.0 145.1 281.0 146.4 281.0 146.4 283.0 146.4 283.0 146.4 284.5 146.4 284.5 146.4 288.5 146.4 288.5 146.4 288.5 145.1 290.0 145.1 290.0 146.4 290.0 146.4 290.0 145.1 293.0 145.1 293.0 146.4 293.0 146.4 297.0 146.4 297.0 146.4 297.0 145.1 298.5 145.1 298.5 146.4 298.5 146.4 300.0 146.4 300.0 146.4 302.0 146.4 302.0 146.4 302.0 145.1 303.0 145.1 303.0 146.4 303.0 146.4 303.0 145.1 304.0 145.1 304.0 146.4 304.0 146.4 305.5 146.4 305.5 146.4 309.5 146.4 309.5 146.4 312.5 146.4 312.5 146.4 312.5 145.1 314.5 145.1 314.5 146.4 314.5 146.4 317.5 146.4 317.5 146.4 319.5 146.4 319.5 146.4 323.5 146.4 323.5 146.4 323.5 145.1 326.5 145.1 326.5 146.4 326.5 146.4 326.5 145.1 328.5 145.1 328.5 146.4 328.5 146.4 330.5 146.4 330.5 146.4 330.5 145.1 332.5 145.1 332.5 146.4 332.5 146.4 336.5 146.4 336.5 146.4 338.0 146.4 338.0 146.4 342.0 146.4 342.0 146.4 342.0 145.1 344.0 145.1 344.0 146.4 344.0 146.4 347.0 146.4 347.0 146.4 351.0 146.4 351.0 146.4 353.0 146.4 353.0 146.4 353.0 145.1 354.5 145.1 354.5 146.4 354.5 146.4 356.0 146.4 356.0 146.4 358.0 146.4 358.0 146.4 359.5 146.4 359.5 146.4 362.5 146.4 362.5 146.4 365.5 146.4 365.5 146.4 365.5 145.1 366.5 145.1 366.5 146.4 366.5 146.4 370.5 146.4 370.5 146.4 373.5 146.4 373.5 146.4 375.0 146.4 375.0 146.4 376.5 146.4 376.5 146.4 378.5 146.4 378.5 146.4 380.0 146.4 380.0 146.4 381.5 146.4 381.5 146.4 385.5 146.4 385.5 146.4 385.5 145.1 386.5 145.1 386.5 146.4 386.5 146.4 388.0 146.4 388.0 146.4 388.0 145.1 389.0 145.1 389.0 146.4 389.0 146.4 392.0 146.4 392.0 146.4 393.5 146.4 393.5 146.4 393.5 145.1 396.5 145.1 396.5 146.4 396.5 146.4 398.5 146.4 398.5 146.4 398.5 145.1 399.5 145.1 399.5 146.4 399.5 146.4 401.0 146.4 401.0 146.4 403.0 146.4 403.0 146.4 405.0 146.4 405.0 146.4 407.0 146.4 407.0 146.4 411.0 146.4 411.0 146.4 411.0 145.1 414.0 145.1 414.0 146.4 414.0 146.4 417.0 146.4 417.0 146.4 418.5 146.4 418.5 146.4 420.5 146.4 420.5 146.4 424.5 146.4 424.5 146.4 426.5 146.4 426.5 146.4 430.5 146.4 430.5 146.4 430.5 145.1 432.5 145.1 432.5 146.4 432.5 146.4 434.5 146.4 434.5 146.4 434.5 145.1 436.5 145.1 436.5 146.4 436.5 146.4 440.5 146.4 440.5 146.4 442.5 146.4 442.5 146.4 442.5 145.1 443.5 145.1 443.5 146.4 443.5 146.4 443.5 145.1 446.5 145.1 446.5 146.4 446.5 146.4 448.5 146.4 448.5 146.4 451.5 146.4 451.5 146.4 455.5 146.4 455.5 146.4 458.5 146.4 458.5 146.4 461.5 146.4 461.5 146.4 461.5 145.1 463.5 145.1 463.5 146.4 463.5 146.4 465.5 146.4 465.5 146.4 465.5 145.1 467.0 145.1 467.0 146.4 467.0 146.4 467.0 145.1 469.0 145.1 469.0 146.4 469.0 146.4 471.0 146.4 471.0 146.4 475.0 146.4 475.0 146.4 477.0 146.4 477.0 146.4 478.5 146.4 478.5 146.4 480.0 146.4 480.0 146.4 484.0 146.4 484.0 146.4 485.5 146.4 485.5 146.4 487.5 146.4 487.5 146.4 489.0 146.4 489.0 146.4 492.0 146.4 492.0 146.4 492.0 145.1 493.0 145.1 493.0 146.4 493.0 146.4 495.0 146.4 495.0 146.4 495.0 145.1 496.0 145.1 496.0 146.4 496.0 146.4 499.0 146.4 499.0 146.4 499.0 145.1 500.0 145.1 500.0 146.4 500.0 146.4 504.0 146.4 504.0 146.4 504.0 145.1 505.0 145.1 505.0 146.4 505.0 146.4 505.0 145.1 506.5 145.1 506.5 146.4 506.5 146.4 509.5 146.4 509.5 146.4 509.5 145.1 511.5 145.1 511.5 146.4 511.5 146.4 514.5 146.4 514.5 146.4 514.5 145.1 516.0 145.1 516.0 146.4 516.0 146.4 520.0 146.4 520.0 146.4 522.0 146.4 522.0 146.4 526.0 146.4 526.0 146.4 529.0 146.4 529.0 146.4 529.0 145.1 530.5 145.1 530.5 146.4 530.5 146.4 530.5 145.1 532.5 145.1 532.5 146.4 532.5 146.4 532.5 145.1 535.5 145.1 535.5 146.4 535.5 146.4 537.0 146.4 537.0 146.4 540.0 146.4 540.0 146.4 543.0 146.4 543.0 146.4 546.0 146.4 546.0 146.4 549.0 146.4 549.0 146.4 549.0 145.1 550.5 145.1 550.5 146.4 550.5 146.4 552.0 146.4 552.0 146.4 555.0 146.4 555.0 146.4 555.0 145.1 556.5 145.1 556.5 146.4 556.5 146.4 558.5 146.4 558.5 146.4 560.5 146.4 560.5 146.4 560.5 145.1 562.5 145.1 562.5 146.4 562.5 146.4 562.5 145.1 565.5 145.1 565.5 146.4 565.5 146.4 565.5 145.1 567.0 145.1 567.0 146.4 567.0 146.4 571.0 146.4 571.0 146.4 573.0 146.4 573.0 146.4 576.0 146.4 576.0 146.4 577.5 146.4 577.5 146.4 577.5 145.1 578.5 145.1 578.5 146.4 578.5 146.4 582.5 146.4 582.5 146.4 585.5 146.4 585.5 146.4 585.5 145.1 586.5 145.1 586.5 146.4 586.5 146.4 588.0 146.4 588.0 146.4 591.0 146.4 591.0 146.4 591.0 145.1 594.0 145.1 594.0 146.4 594.0 146.4 597.0 146.4 597.0 146.4 601.0 146.4 601.0 146.4 602.5 146.4 602.5 146.4 604.0 146.4 604.0 146.4 604.0 145.1 607.0 145.1 607.0 146.4 607.0 146.4 607.0 145.1 608.0 145.1 608.0 146.4 608.0 146.4 609.5 146.4 609.5 146.4 609.5 145.1 610.5 145.1 610.5 146.4 610.5 146.4 614.5 146.4 614.5 146.4 616.5 146.4 616.5 146.4 618.5 146.4 618.5 146.4 620.5 146.4 620.5 146.4 622.5 146.4 622.5 146.4 624.5 146.4 624.5 146.4 627.5 146.4 627.5 146.4 629.0 146.4 629.0 146.4 633.0 146.4 633.0 146.4 637.0 146.4 637.0 146.4 640.0 146.4 640.0 146.4 643.0 146.4 643.0 146.4 647.0 146.4 647.0 146.4 647.0 145.1 648.0 145.1 648.0 146.4 648.0 146.4 649.5 146.4 649.5 146.4 649.5 145.1 650.5 145.1 650.5 146.4 650.5 146.4 654.5 146.4 654.5 146.4 654.5 145.1 657.5 145.1 657.5 146.4 657.5 146.4 657.5 145.1 660.5 145.1 660.5 146.4 660.5 146.4 664.5 146.4 664.5 146.4 664.5 145.1 666.0 145.1 666.0 146.4 666.0 146.4 668.0 146.4 668.0 146.4 668.0 145.1 669.0 145.1 669.0 146.4 669.0 146.4 670.5 146.4 670.5 146.4 670.5 145.1 673.5 145.1 673.5 146.4 673.5 146.4 673.5 145.1 674.5 145.1 674.5 146.4 674.5 146.4 676.0 146.4 676.0 146.4 679.0 146.4 679.0 146.4 682.0 146.4 682.0 146.4 684.0 146.4 684.0 146.4 684.0 145.1 687.0 145.1 687.0 146.4 687.0 146.4 688.5 146.4 688.5 146.4 691.5 146.4 691.5 146.4 693.5 146.4 693.5 146.4 695.5 146.4 695.5 146.4 697.5 146.4 697.5 146.4 699.0 146.4 699.0 146.4 703.0 146.4 703.0 146.4 703.0 145.1 704.0 145.1 704.0 146.4 704.0 146.4 708.0 146.4 708.0 146.4 709.5 146.4 709.5 146.4 713.5 146.4 713.5 146.4 713.5 145.1 715.5 145.1 715.5 146.4 715.5 146.4 719.5 146.4 719.5 146.4 723.5 146.4 723.5 146.4 727.5 146.4 727.5 146.4 730.5 146.4 730.5 146.4 733.5 146.4 733.5 146.4 736.5 146.4 736.5 146.4 738.5 146.4 738.5 146.4 740.5 146.4 740.5 146.4 740.5 145.1 742.0 145.1 742.0 146.4 742.0 146.4 742.0 145.1 744.0 145.1 744.0 146.4 744.0 146.4 746.0 146.4 746.0 146.4 746.0 145.1 747.0 145.1 747.0 146.4 747.0 146.4 749.0 146.4 749.0 146.4 751.0 146.4 751.0 146.4 751.0 145.1 752.0 145.1 752.0 146.4 752.0 146.4 754.0 146.4 754.0 146.4 754.0 145.1 755.0 145.1 755.0 146.4 755.0 146.4 758.0 146.4 758.0 146.4 759.5 146.4 759.5 146.4 759.5 145.1 760.5 145.1 760.5 146.4 760.5 146.4 762.0 146.4 762.0 146.4 764.0 146.4 764.0 146.4 764.0 145.1 766.0 145.1 766.0 146.4 766.0 146.4 768.0 146.4 768.0 146.4 769.5 146.4 769.5 146.4 771.0 146.4 771.0 146.4 774.0 146.4 774.0 146.4 774.0 145.1 776.0 145.1 776.0 146.4 776.0 146.4 779.0 146.4 779.0 146.4 782.0 146.4 782.0 146.4 782.0 145.1 783.5 145.1 783.5 146.4 783.5 146.4 786.5 146.4 786.5 146.4 788.0 146.4 788.0 146.4 789.5 146.4 789.5 146.4 791.0 146.4 791.0 146.4 791.0 145.1 792.0 145.1 792.0 146.4 792.0 146.4 792.0 145.1 795.0 145.1 795.0 146.4 795.0 146.4 795.0 145.1 796.0 145.1 796.0 146.4 796.0 146.4 796.0 145.1 799.0 145.1 799.0 146.4 799.0 146.4 801.0 146.4 801.0 146.4 805.0 146.4 805.0 146.4 809.0 146.4 809.0 146.4 810.5 146.4 810.5 146.4 814.5 146.4 814.5 146.4 814.5 145.1 816.0 145.1 816.0 146.4 816.0 146.4 816.0 145.1 818.0 145.1 818.0 146.4 818.0 146.4 818.0 145.1 820.0 145.1 820.0 146.4 820.0 146.4 824.0 146.4 824.0 146.4 824.0 145.1 826.0 145.1 826.0 146.4 826.0 146.4 829.0 146.4 829.0 146.4 832.0 146.4 832.0 146.4 836.0 146.4 836.0 146.4 836.0 145.1 838.0 145.1 838.0 146.4 838.0 146.4 840.0 146.4 840.0 146.4 844.0 146.4 844.0 146.4 845.5 146.4 845.5 146.4 845.5 145.1 846.5 145.1 846.5 146.4 846.5 146.4 848.0 146.4 848.0 146.4 849.5 146.4 849.5 146.4 851.0 146.4 851.0 146.4 852.5 146.4 852.5 146.4 855.5 146.4 855.5 146.4 857.0 146.4 857.0 146.4 857.0 145.1 859.0 145.1 859.0 146.4 859.0 146.4 860.5 146.4 860.5 146.4 863.5 146.4 863.5 146.4 863.5 145.1 864.5 145.1 864.5 146.4 864.5 146.4 866.5 146.4 866.5 146.4 866.5 145.1 867.5 145.1 867.5 146.4 867.5 146.4 869.5 146.4 869.5 146.4 871.0 146.4 871.0 146.4 871.0 145.1 872.5 145.1 872.5 146.4 872.5 146.4 874.5 146.4 874.5 146.4 878.5 146.4 878.5 146.4 881.5 146.4 881.5 146.4 883.5 146.4 883.5 146.4 885.0 146.4 885.0 146.4 885.0 145.1 886.0 145.1 886.0 146.4 886.0 146.4 887.5 146.4 887.5 146.4 887.5 145.1 889.0 145.1 889.0 146.4 889.0 146.4 889.0 145.1 891.0 145.1 891.0 146.4 891.0 146.4 892.5 146.4 892.5 146.4 895.5 146.4 895.5 146.4 899.5 146.4 899.5 146.4 902.5 146.4 902.5 146.4 906.5 146.4 906.5 146.4 908.5 146.4 908.5 146.4 908.5 145.1 909.5 145.1 909.5 146.4 909.5 146.4 911.0 146.4 911.0 146.4 913.0 146.4 913.0 146.4 914.5 146.4 914.5 146.4 917.5 146.4 917.5 146.4 919.0 146.4 919.0 146.4 921.0 146.4 921.0 146.4 921.0 145.1 922.0 145.1 922.0 146.4 922.0 146.4 926.0 146.4 926.0 146.4 929.0 146.4 929.0 146.4 929.0 145.1 930.0 145.1 930.0 146.4 930.0 146.4 932.0 146.4 932.0 146.4 936.0 146.4 936.0 146.4 940.0 146.4 940.0 146.4 942.0 146.4 942.0 146.4 946.0 146.4 946.0 146.4 950.0 146.4 950.0 146.4 951.5 146.4 951.5 146.4 953.0 146.4 953.0 146.4 953.0 145.1 954.0 145.1 954.0 146.4 954.0 146.4 954.0 145.1 955.0 145.1 955.0 146.4 955.0 146.4 956.5 146.4 956.5 146.4 958.0 146.4 958.0 146.4 958.0 145.1 959.0 145.1 959.0 146.4 959.0 146.4 959.0 145.1 961.0 145.1 961.0 146.4 961.0 146.4 961.0 145.1 963.0 145.1 963.0 146.4 963.0 146.4 966.0 146.4 966.0 146.4 966.0 145.1 968.0 145.1 968.0 146.4 968.0 146.4 972.0 146.4 972.0 146.4 974.0 146.4 974.0 146.4 974.0 145.1 975.5 145.1 975.5 146.4 975.5 146.4 978.5 146.4 978.5 146.4 982.5 146.4 982.5 146.4 986.5 146.4 986.5 146.4 988.5 146.4 988.5 146.4 991.5 146.4 991.5 146.4 995.5 146.4 995.5 146.4 998.5 146.4 998.5 146.4 1001.5 146.4 1001.5 146.4 1003.0 146.4 1003.0 146.4 1003.0 145.1 1006.0 145.1 1006.0 146.4 1006.0 146.4 1006.0 145.1 1007.0 145.1 1007.0 146.4" fill="none" stroke="#f8f8f8" stroke-width="1.7" stroke-linejoin="miter"/></svg>
<div class="a" style="left:46px;top:773.5px;width:1px;height:3.5px;background:#d0d0d0;"></div>
<div class="t" style="top:773.2px;left:32.8px;font-size:11px;color:#d4d4d4;letter-spacing:-0.43px;">12:33:00</div>
<div class="a" style="left:138px;top:773.5px;width:1px;height:3.5px;background:#d0d0d0;"></div>
<div class="t" style="top:773.2px;left:124.9px;font-size:11px;color:#d4d4d4;letter-spacing:-0.43px;">12:33:30</div>
<div class="a" style="left:230px;top:773.5px;width:1px;height:3.5px;background:#d0d0d0;"></div>
<div class="t" style="top:773.2px;left:217.0px;font-size:11px;color:#d4d4d4;letter-spacing:-0.43px;">12:34:00</div>
<div class="a" style="left:322px;top:773.5px;width:1px;height:3.5px;background:#d0d0d0;"></div>
<div class="t" style="top:773.2px;left:309.1px;font-size:11px;color:#d4d4d4;letter-spacing:-0.43px;">12:34:30</div>
<div class="a" style="left:414px;top:773.5px;width:1px;height:3.5px;background:#d0d0d0;"></div>
<div class="t" style="top:773.2px;left:401.2px;font-size:11px;color:#d4d4d4;letter-spacing:-0.43px;">12:35:00</div>
<div class="a" style="left:506px;top:773.5px;width:1px;height:3.5px;background:#d0d0d0;"></div>
<div class="t" style="top:773.2px;left:493.3px;font-size:11px;color:#d4d4d4;letter-spacing:-0.43px;">12:35:30</div>
<div class="a" style="left:598px;top:773.5px;width:1px;height:3.5px;background:#d0d0d0;"></div>
<div class="t" style="top:773.2px;left:585.4px;font-size:11px;color:#d4d4d4;letter-spacing:-0.43px;">12:36:00</div>
<div class="a" style="left:690px;top:773.5px;width:1px;height:3.5px;background:#d0d0d0;"></div>
<div class="t" style="top:773.2px;left:677.5px;font-size:11px;color:#d4d4d4;letter-spacing:-0.43px;">12:36:30</div>
<div class="a" style="left:782px;top:773.5px;width:1px;height:3.5px;background:#d0d0d0;"></div>
<div class="t" style="top:773.2px;left:769.6px;font-size:11px;color:#d4d4d4;letter-spacing:-0.43px;">12:37:00</div>
<div class="a" style="left:874px;top:773.5px;width:1px;height:3.5px;background:#d0d0d0;"></div>
<div class="t" style="top:773.2px;left:861.7px;font-size:11px;color:#d4d4d4;letter-spacing:-0.43px;">12:37:30</div>
<div class="a" style="left:966px;top:773.5px;width:1px;height:3.5px;background:#d0d0d0;"></div>
<div class="t" style="top:773.2px;left:953.8px;font-size:11px;color:#d4d4d4;letter-spacing:-0.43px;">12:38:00</div>
<div class="a" style="left:1059px;top:773.5px;width:1px;height:3.5px;background:#d0d0d0;"></div>
<div class="t" style="top:773.2px;left:1045.9px;font-size:11px;color:#d4d4d4;letter-spacing:-0.43px;">12:38:30</div>
<div class="a" style="left:1151px;top:773.5px;width:1px;height:3.5px;background:#d0d0d0;"></div>
<div class="t" style="top:773.2px;left:1138.0px;font-size:11px;color:#d4d4d4;letter-spacing:-0.43px;">12:39:00</div>
<div class="a" style="left:1243px;top:773.5px;width:1px;height:3.5px;background:#d0d0d0;"></div>
<div class="t" style="top:773.2px;left:1230.1px;font-size:11px;color:#d4d4d4;letter-spacing:-0.43px;">12:39:30</div>
<div class="a" style="left:1335px;top:773.5px;width:1px;height:3.5px;background:#d0d0d0;"></div>
<div class="t" style="top:773.2px;left:1322.2px;font-size:11px;color:#d4d4d4;letter-spacing:-0.43px;">12:40:00</div>
<div class="a" style="left:1427px;top:773.5px;width:1px;height:3.5px;background:#d0d0d0;"></div>
<div class="t" style="top:773.2px;left:1414.3px;font-size:11px;color:#d4d4d4;letter-spacing:-0.43px;">12:40:30</div>
<div class="a" style="left:1519px;top:773.5px;width:1px;height:3.5px;background:#d0d0d0;"></div>
<div class="t" style="top:773.2px;left:1506.4px;font-size:11px;color:#d4d4d4;letter-spacing:-0.43px;">12:41:00</div>
<div class="a" style="left:1611px;top:773.5px;width:1px;height:3.5px;background:#d0d0d0;"></div>
<div class="t" style="top:773.2px;left:1598.5px;font-size:11px;color:#d4d4d4;letter-spacing:-0.43px;">12:41:30</div>
<div class="a" style="left:1703px;top:773.5px;width:1px;height:3.5px;background:#d0d0d0;"></div>
<div class="t" style="top:773.2px;left:1690.6px;font-size:11px;color:#d4d4d4;letter-spacing:-0.43px;">12:42:00</div>
<div class="a" style="left:1795px;top:773.5px;width:1px;height:3.5px;background:#d0d0d0;"></div>
<div class="t" style="top:773.2px;left:1782.7px;font-size:11px;color:#d4d4d4;letter-spacing:-0.43px;">12:42:30</div>
<div class="a" style="left:4px;top:794.5px;width:1889px;height:211.5px;background:#1e1e1e;"></div>
<div class="t" style="top:793.4px;left:32.6px;font-size:11px;letter-spacing:-0.07px;">ae19-egh11.core04.ffm3.de.aurologic.net</div>
<div class="t" style="top:793.4px;left:1695.0px;font-size:11px;letter-spacing:-0.17px;">10 minutes (12:32:55 - 12:42:55)</div>
<svg class="a" style="left:1852px;top:794.5px" width="12" height="12" viewBox="0 0 12 12"><circle cx="6" cy="6" r="6" fill="#9c9c9c"/><path d="M3.2 4.8l2.8 2.8l2.8-2.8" stroke="#2d2d30" stroke-width="1.5" fill="none"/></svg>
<div class="a" style="left:32px;top:808px;width:1842px;height:25px;background:#404040;border-top:1px solid #787878;border-bottom:1px solid #787878;border-left:1px solid #787878"></div>
<svg class="a" style="left:32px;top:818px" width="1842" height="1"><path d="M10 0.5H1842" stroke="#9aa09a" stroke-width="1" stroke-dasharray="4 5"/></svg>
<div class="t" style="top:806.8px;left:932.2px;font-size:9.5px;color:#f07a52;letter-spacing:-0.09px;">Jitter (ms)</div>
<div class="t" style="top:811.3px;left:17.3px;font-size:11px;letter-spacing:-0.47px;">35</div>
<div class="t" style="top:833.3px;left:5.0px;font-size:11px;letter-spacing:-0.22px;">2910</div>
<div class="t" style="top:971.3px;left:22.7px;font-size:11px;letter-spacing:-0.19px;">0</div>
<div class="t" style="top:-6.9px;left:0.0px;letter-spacing:-0.53px;left:-7.2px;width:63px;top:904.5px;transform:rotate(-90deg);">Latency (ms)</div>
<div class="t" style="top:835.2px;left:1875.3px;font-size:11.5px;color:#f60000;letter-spacing:-0.40px;">30</div>
<div class="t" style="top:-6.9px;left:0.0px;font-size:11px;color:#f00000;letter-spacing:-0.40px;left:1847.5px;width:67.5px;top:904.8px;transform:rotate(90deg);">Packet Loss %</div>
<div class="a" style="left:32px;top:838px;width:1842px;height:147.5px;background:#6c3c3c;"></div>
<div class="a" style="left:32px;top:975px;width:1842px;height:5px;background:#76652f;"></div>
<div class="a" style="left:32px;top:980px;width:1842px;height:5.4px;background:#3e5f39;"></div>
<div class="a" style="left:32px;top:985.4px;width:1842px;height:1px;background:#4c4c4c;"></div>
<div class="a" style="left:32px;top:838px;width:1px;height:147.5px;background:#8a7474;"></div>
<div class="t" style="top:869.7px;left:33.2px;font-size:11px;color:#9f7e7e;letter-spacing:-0.24px;">2250 ms</div>
<div class="t" style="top:907.7px;left:33.2px;font-size:11px;color:#9f7e7e;letter-spacing:-0.24px;">1500 ms</div>
<div class="t" style="top:945.7px;left:33.2px;font-size:11px;color:#9f7e7e;letter-spacing:-0.26px;">750 ms</div>
<svg class="a" style="left:32px;top:838px" width="1842" height="148" viewBox="0 0 1842 148"><rect x="313" y="0" width="16" height="147.5" fill="#ff2600"/><rect x="380" y="0" width="59" height="147.5" fill="#ff2600"/><rect x="589" y="0" width="54" height="147.5" fill="#ff2600"/><rect x="781" y="0" width="16" height="147.5" fill="#ff2600"/><rect x="990" y="0" width="157" height="147.5" fill="#ff2600"/><rect x="1440" y="0" width="57" height="147.5" fill="#ff2600"/><rect x="1557" y="0" width="118" height="147.5" fill="#ff2600"/><rect x="1" y="33" width="1841" height="1" fill="#d8b8b8" fill-opacity="0.32"/><rect x="1" y="71" width="1841" height="1" fill="#d8b8b8" fill-opacity="0.32"/><rect x="1" y="109" width="1841" height="1" fill="#d8b8b8" fill-opacity="0.32"/><rect x="0.0" y="145.35" width="313.0" height="1.7" fill="#f8f8f8"/><rect x="470.5" y="145.35" width="101.9" height="1.7" fill="#f8f8f8"/><rect x="679.6" y="145.35" width="30.8" height="1.7" fill="#f8f8f8"/><rect x="730.5" y="145.35" width="24.7" height="1.7" fill="#f8f8f8"/><rect x="811.4" y="145.35" width="111.9" height="1.7" fill="#f8f8f8"/><rect x="1172.4" y="145.35" width="245.0" height="1.7" fill="#f8f8f8"/><rect x="1516.4" y="145.35" width="29.1" height="1.7" fill="#f8f8f8"/><rect x="1693.8" y="145.35" width="148.2" height="1.7" fill="#f8f8f8"/><path d="M3.0 146.2 8.0 146.2 8.0 146.2 8.0 145.2 12.0 145.2 12.0 145.2 12.0 146.2 14.5 146.2 14.5 146.2 14.5 145.2 18.5 145.2 18.5 145.2 18.5 146.2 20.5 146.2 22.5 146.2 26.5 146.2 30.5 146.2 30.5 146.2 30.5 145.2 31.7 145.2 31.7 145.2 31.7 141.7 32.0 141.7 32.0 145.2 32.0 145.2 32.0 146.2 36.0 146.2 38.0 146.2 38.0 146.2 38.0 145.2 39.9 145.2 39.9 145.2 39.9 141.2 40.2 141.2 40.2 145.2 40.2 145.2 40.2 146.2 43.2 146.2 45.7 146.2 48.2 146.2 48.2 146.2 48.2 144.2 50.7 144.2 50.7 144.2 50.7 146.2 53.7 146.2 54.6 146.2 54.6 146.2 54.6 139.7 54.9 139.7 54.9 146.2 57.9 146.2 62.9 146.2 67.9 146.2 70.9 146.2 70.9 146.2 70.9 144.7 73.9 144.7 73.9 144.7 73.9 146.2 76.9 146.2 76.9 146.2 76.9 145.2 79.0 145.2 79.0 145.2 79.0 134.7 79.3 134.7 79.3 145.2 79.3 145.2 79.3 144.7 81.3 144.7 81.3 144.7 81.3 146.2 83.3 146.2 87.3 146.2 92.3 146.2 96.3 146.2 96.3 146.2 96.3 143.7 98.8 143.7 98.8 143.7 98.8 146.2 101.3 146.2 101.3 146.2 101.3 144.2 103.8 144.2 103.8 144.2 103.8 146.2 106.8 146.2 109.2 146.2 109.2 146.2 109.2 142.7 109.5 142.7 109.5 146.2 111.5 146.2 114.5 146.2 116.5 146.2 118.5 146.2 118.5 146.2 118.5 143.7 123.5 143.7 123.5 143.7 123.5 146.2 126.0 146.2 131.0 146.2 131.0 146.2 131.0 143.2 131.3 143.2 131.3 146.2 131.3 146.2 131.3 144.7 134.3 144.7 134.3 144.7 134.3 145.2 136.3 145.2 136.3 145.2 136.3 146.2 139.3 146.2 141.8 146.2 143.8 146.2 148.8 146.2 150.8 146.2 155.8 146.2 158.8 146.2 159.3 146.2 159.3 146.2 159.3 141.2 159.6 141.2 159.6 146.2 159.6 146.2 159.6 144.2 161.6 144.2 161.6 144.2 161.6 146.2 164.1 146.2 164.1 146.2 164.1 145.2 169.1 145.2 169.1 145.2 169.1 146.2 173.1 146.2 173.1 146.2 173.1 144.7 174.7 144.7 174.7 144.7 174.7 142.2 175.0 142.2 175.0 144.7 179.0 144.7 179.0 144.7 179.0 145.2 184.0 145.2 184.0 145.2 184.0 146.2 188.0 146.2 191.0 146.2 194.0 146.2 194.0 146.2 194.0 141.2 194.3 141.2 194.3 146.2 196.8 146.2 196.8 146.2 196.8 145.2 201.8 145.2 201.8 145.2 201.8 146.2 205.0 146.2 205.0 146.2 205.0 142.2 205.3 142.2 205.3 146.2 207.8 146.2 207.8 146.2 207.8 143.7 210.8 143.7 210.8 143.7 210.8 146.2 215.8 146.2 218.8 146.2 220.8 146.2 223.8 146.2 226.8 146.2 228.0 146.2 228.0 146.2 228.0 141.2 228.3 141.2 228.3 146.2 231.3 146.2 234.3 146.2 239.3 146.2 243.3 146.2 244.0 146.2 244.0 146.2 244.0 133.2 244.3 133.2 244.3 146.2 246.7 146.2 246.7 146.2 246.7 129.2 247.0 129.2 247.0 146.2 251.0 146.2 251.0 146.2 251.0 140.2 251.3 140.2 251.3 146.2 254.3 146.2 256.3 146.2 256.3 146.2 256.3 139.2 256.6 139.2 256.6 146.2 260.6 146.2 263.1 146.2 267.1 146.2 270.1 146.2 275.1 146.2 277.6 146.2 281.0 146.2 281.0 146.2 281.0 142.2 281.3 142.2 281.3 146.2 283.3 146.2 287.3 146.2 287.3 146.2 287.3 143.7 292.3 143.7 292.3 143.7 292.3 146.2 293.0 146.2 293.0 146.2 293.0 141.2 293.3 141.2 293.3 146.2 298.3 146.2 301.0 146.2 301.0 146.2 301.0 140.2 301.3 140.2 301.3 146.2 303.3 146.2 303.3 146.2 303.3 144.2 308.3 144.2 308.3 144.2 308.3 146.2 310.8 146.2 313.0 146.2 313.0 146.2" fill="none" stroke="#f8f8f8" stroke-width="1.7" stroke-linejoin="miter"/><path d="M329.4 6.4 331.4 6.4 331.4 8.9 332.7 8.9 332.7 15.4 333.8 15.4 333.8 18.6 335.8 18.6 335.8 33.9 338.2 33.9 338.2 51.1 339.2 51.1 339.2 55.3 341.6 55.3 341.6 49.0 342.2 49.0 342.4 60.8 344.2 60.8 344.2 63.1 345.5 63.1 345.5 67.0 347.8 67.0 347.8 68.6 348.9 68.6 348.9 73.2 350.5 73.2 350.5 77.6 352.8 77.6 352.8 92.0 354.2 92.0 354.2 83.4 355.3 83.4 355.3 98.2 358.0 98.2 358.0 96.7 358.8 96.7 358.8 101.4 359.6 101.4 359.6 104.5 360.7 104.5 360.7 107.6 361.9 107.6 361.9 110.4 363.2 110.4 363.2 91.2 365.0 91.2 365.0 82.6 366.1 82.6 366.1 85.4 368.5 85.4 368.5 68.6 370.0 68.6 370.0 56.1 372.2 56.1 372.2 51.4 372.7 51.4 372.7 31.1 374.6 31.1 374.6 25.6 376.9 25.6 376.9 15.4 378.2 15.4 378.2 7.6 379.6 7.6 379.6 0.1" fill="none" stroke="#f8f8f8" stroke-width="1.7" stroke-linejoin="miter"/><path d="M439.6 4.2 439.6 20.1 441.6 20.1 441.6 34.2 443.2 34.2 443.2 22.5 444.4 22.5 444.4 38.9 445.5 38.9 445.5 52.9 447.2 52.9 447.2 68.6 448.8 68.6 448.8 73.2 450.3 73.2 450.3 87.3 451.9 87.3 451.9 91.2 453.8 91.2 453.8 106.1 454.9 106.1 454.9 108.9 456.3 108.9 456.3 121.7 457.7 121.7 457.7 124.8 458.8 124.8 458.8 127.9 459.9 127.9 459.9 130.8 461.9 130.8 461.9 135.0 464.2 135.0 464.2 139.7 467.1 139.7 467.1 145.1 470.5 145.1 470.5 146.4 472.5 146.2 475.5 146.2 475.5 146.2 475.5 143.7 478.0 143.7 478.0 143.7 478.0 146.2 481.0 146.2 483.0 146.2 485.5 146.2 486.0 146.2 486.0 146.2 486.0 141.2 486.3 141.2 486.3 146.2 491.3 146.2 493.8 146.2 496.8 146.2 498.0 146.2 498.0 146.2 498.0 143.2 498.3 143.2 498.3 146.2 502.3 146.2 504.3 146.2 508.3 146.2 512.3 146.2 513.0 146.2 513.0 146.2 513.0 142.2 513.3 142.2 513.3 146.2 516.3 146.2 516.3 146.2 516.3 143.7 518.3 143.7 518.3 143.7 518.3 146.2 521.3 146.2 523.8 146.2 528.0 146.2 528.0 146.2 528.0 141.2 528.3 141.2 528.3 146.2 530.3 146.2 532.8 146.2 535.8 146.2 537.8 146.2 537.8 146.2 537.8 145.2 542.8 145.2 542.8 145.2 542.8 144.7 543.0 144.7 543.0 144.7 543.0 142.7 543.3 142.7 543.3 144.7 543.3 144.7 543.3 146.2 547.3 146.2 549.8 146.2 554.8 146.2 557.3 146.2 558.0 146.2 558.0 146.2 558.0 143.2 558.3 143.2 558.3 146.2 563.3 146.2 566.3 146.2 570.3 146.2 572.4 146.2 572.4 146.2 572.4 146.4 572.4 133.4 573.6 133.4 573.6 140.4 575.5 140.4 575.5 131.5 577.2 131.5 577.2 124.0 579.1 124.0 579.1 116.2 580.7 116.2 580.7 84.2 581.6 84.2 581.6 77.6 583.2 77.6 583.2 58.4 585.5 58.4 585.5 50.1 586.6 50.1 586.6 20.1 588.6 20.1 588.6 11.1" fill="none" stroke="#f8f8f8" stroke-width="1.7" stroke-linejoin="miter"/><path d="M643.6 11.1 643.6 24.8 645.5 24.8 645.5 39.7 647.4 39.7 647.4 54.5 648.8 54.5 648.8 68.6 650.7 68.6 650.7 82.6 653.5 85.0 653.5 96.7 654.7 98.2 654.7 110.8 656.6 112.3 656.6 117.0 657.7 117.0 657.7 129.5 660.3 129.5 660.3 134.2 663.5 134.2 663.5 32.3 664.2 32.3 664.2 36.5 665.7 36.5 665.7 50.6 666.9 50.6 666.9 63.9 668.8 63.9 668.8 77.9 670.7 77.9 670.7 93.6 673.0 95.1 673.0 107.6 674.7 107.6 674.7 124.0 676.6 124.0 676.6 139.7 678.6 139.7 678.6 135.4 679.6 135.4 679.6 146.4 681.5 146.2 681.5 146.2 681.5 140.7 681.8 140.7 681.8 146.2 683.8 146.2 685.5 146.2 685.5 146.2 685.5 142.7 685.8 142.7 685.8 146.2 687.8 146.2 690.3 146.2 690.3 146.2 690.3 144.2 693.0 144.2 693.0 144.2 693.0 142.2 693.3 142.2 693.3 144.2 693.3 144.2 693.3 143.7 695.3 143.7 695.3 143.7 695.3 146.2 700.3 146.2 700.3 146.2 700.3 143.7 702.8 143.7 702.8 143.7 702.8 146.2 707.8 146.2 709.8 146.2 710.3 146.2 710.3 146.2 710.3 146.4 710.3 132.6 712.4 132.6 712.4 101.4 713.6 101.4 713.6 115.4 715.0 115.4 715.0 119.3 716.6 119.3 716.6 132.6 718.5 132.6 718.5 68.2 719.6 68.2 719.6 82.6 720.7 82.6 720.7 86.5 722.7 86.5 722.7 99.8 723.8 99.8 723.8 113.1 725.5 113.1 725.5 119.3 726.8 119.3 726.8 132.6 728.6 132.6 728.6 142.8 730.5 142.8 730.5 146.4 734.5 146.2 736.5 146.2 736.5 146.2 736.5 145.2 741.5 145.2 741.5 145.2 741.5 146.2 741.7 146.2 741.7 146.2 741.7 140.7 742.0 140.7 742.0 146.2 746.0 146.2 751.0 146.2 755.0 146.2 755.2 146.2 755.2 146.2 755.2 146.4 755.2 137.3 756.4 137.3 756.4 142.8 758.3 142.8 758.3 139.7 760.3 139.7 760.3 121.4 761.1 121.4 761.1 135.8 763.2 135.8 763.2 127.9 766.3 127.9 766.3 114.7 767.4 114.7 767.4 119.3 769.2 119.3 769.2 97.5 770.0 97.5 770.0 115.4 772.1 115.4 772.1 96.4 773.0 96.4 773.0 109.2 775.3 109.2 775.3 74.8 777.7 74.8 777.7 42.0 778.6 42.0 778.6 10.4 779.9 10.4 779.9 24.8 780.8 24.8" fill="none" stroke="#f8f8f8" stroke-width="1.7" stroke-linejoin="miter"/><path d="M797.5 13.1 797.5 27.2 799.6 27.2 799.6 34.2 800.7 34.2 800.7 49.0 802.7 49.0 802.7 64.7 804.2 64.7 804.2 78.7 805.8 78.7 805.8 93.6 806.9 93.6 806.9 107.6 808.6 107.6 808.6 120.1 810.0 120.1 810.0 131.8 811.4 131.8 811.4 146.4 814.4 146.2 816.5 146.2 816.5 146.2 816.5 144.2 816.8 144.2 816.8 146.2 818.8 146.2 821.5 146.2 821.5 146.2 821.5 141.7 821.8 141.7 821.8 146.2 823.8 146.2 828.8 146.2 832.8 146.2 832.8 146.2 832.8 144.2 836.8 144.2 836.8 144.2 836.8 146.2 839.3 146.2 839.3 146.2 839.3 143.7 840.0 143.7 840.0 143.7 840.0 143.2 840.3 143.2 840.3 143.7 840.3 143.7 840.3 146.2 844.3 146.2 846.8 146.2 848.0 146.2 848.0 146.2 848.0 142.7 848.3 142.7 848.3 146.2 851.3 146.2 855.3 146.2 857.3 146.2 857.3 146.2 857.3 144.2 859.3 144.2 863.3 144.2 865.8 144.2 865.8 144.2 865.8 146.2 866.0 146.2 866.0 146.2 866.0 143.2 866.3 143.2 866.3 146.2 868.3 146.2 868.3 146.2 868.3 145.2 870.0 145.2 870.0 145.2 870.0 142.2 870.3 142.2 870.3 145.2 870.3 145.2 870.3 146.2 872.8 146.2 874.8 146.2 874.8 146.2 874.8 143.7 876.8 143.7 880.5 143.7 880.5 143.7 880.5 135.7 880.8 135.7 880.8 143.7 880.8 143.7 880.8 146.2 884.8 146.2 887.3 146.2 888.0 146.2 888.0 146.2 888.0 143.2 888.3 143.2 888.3 146.2 893.3 146.2 893.3 146.2 893.3 143.7 898.3 143.7 898.3 143.7 898.3 146.2 901.3 146.2 906.3 146.2 908.3 146.2 912.3 146.2 914.8 146.2 919.8 146.2 923.3 146.2 923.3 146.2 923.3 146.4 923.3 136.5 924.4 136.5 924.4 143.2 926.4 143.2 926.4 138.9 927.4 138.9 927.4 129.5 928.6 129.5 928.6 134.5 930.7 134.5 930.7 125.6 931.8 125.6 931.8 132.3 935.5 132.3 935.5 124.0 936.6 124.0 936.6 113.1 937.7 113.1 937.7 122.0 941.3 122.0 941.3 114.7 943.3 114.7 943.3 106.8 944.4 106.8 944.4 97.5 946.3 97.5 946.3 107.9 948.3 107.9 948.3 109.2 950.3 109.2 950.3 89.7 952.5 89.7 952.5 94.3 953.3 94.3 953.3 85.0 954.6 85.0 954.6 90.9 958.2 90.9 958.2 72.5 959.6 72.5 959.6 61.5 961.1 61.5 961.1 68.2 963.6 68.2 963.6 60.0 964.6 60.0 964.6 49.5 965.8 49.5 965.8 56.1 967.4 56.1 967.4 56.8 969.9 56.8 969.9 46.7 970.8 46.7 970.8 39.7 972.4 39.7 972.4 42.8 973.9 42.8 973.9 48.2 976.4 48.2 976.4 26.4 977.8 26.4 977.8 31.8 979.1 31.8 979.1 35.0 982.4 35.0 982.4 29.5 983.8 29.5 983.8 32.9 986.8 32.9 986.8 24.0 987.7 24.0 987.7 15.4 988.9 15.4 988.9 20.1 989.9 20.1" fill="none" stroke="#f8f8f8" stroke-width="1.7" stroke-linejoin="miter"/><path d="M1147.5 27.6 1147.5 42.0 1151.6 42.0 1151.6 59.2 1152.7 59.2 1152.7 73.2 1154.6 73.2 1154.6 76.7 1155.8 76.7 1155.8 81.1 1157.4 81.1 1157.4 94.3 1158.9 94.3 1158.9 98.2 1160.5 98.2 1160.5 111.5 1161.6 111.5 1161.6 126.4 1163.6 126.4 1163.6 129.8 1164.6 129.8 1164.6 144.3 1167.4 144.3 1167.4 141.2 1168.6 141.2 1168.6 133.4 1169.7 133.4 1169.7 139.7 1170.8 139.7 1170.8 144.3 1172.4 144.3 1172.4 146.4 1176.4 146.2 1178.4 146.2 1178.4 146.2 1178.4 144.7 1182.4 144.7 1182.4 144.7 1182.4 146.2 1184.0 146.2 1184.0 146.2 1184.0 143.7 1184.3 143.7 1184.3 146.2 1184.3 146.2 1184.3 144.7 1188.3 144.7 1188.3 144.7 1188.3 146.2 1191.3 146.2 1193.8 146.2 1197.8 146.2 1199.9 146.2 1199.9 146.2 1199.9 139.2 1200.2 139.2 1200.2 146.2 1203.2 146.2 1205.7 146.2 1208.2 146.2 1213.2 146.2 1218.2 146.2 1218.2 146.2 1218.2 145.2 1220.7 145.2 1220.7 145.2 1220.7 146.2 1223.7 146.2 1226.2 146.2 1231.2 146.2 1235.2 146.2 1235.2 146.2 1235.2 144.7 1240.2 144.7 1240.2 144.7 1240.2 146.2 1242.7 146.2 1246.7 146.2 1248.7 146.2 1253.7 146.2 1258.7 146.2 1260.7 146.2 1260.7 146.2 1260.7 144.7 1261.0 144.7 1261.0 144.7 1261.0 141.2 1261.3 141.2 1261.3 144.7 1261.3 144.7 1261.3 146.2 1263.8 146.2 1263.8 146.2 1263.8 144.2 1265.8 144.2 1265.8 144.2 1265.8 144.7 1268.3 144.7 1268.3 144.7 1268.3 146.2 1272.3 146.2 1275.3 146.2 1275.3 146.2 1275.3 145.2 1280.3 145.2 1280.3 145.2 1280.3 146.2 1283.3 146.2 1285.8 146.2 1288.3 146.2 1292.3 146.2 1295.0 146.2 1295.0 146.2 1295.0 142.2 1295.3 142.2 1295.3 146.2 1297.3 146.2 1299.3 146.2 1302.3 146.2 1305.3 146.2 1310.0 146.2 1310.0 146.2 1310.0 142.2 1310.3 142.2 1310.3 146.2 1310.3 146.2 1310.3 145.2 1314.3 145.2 1314.3 145.2 1314.3 146.2 1317.3 146.2 1322.3 146.2 1324.4 146.2 1324.4 146.2 1324.4 141.2 1324.7 141.2 1324.7 146.2 1328.7 146.2 1331.2 146.2 1336.2 146.2 1339.0 146.2 1339.0 146.2 1339.0 142.2 1339.3 142.2 1339.3 146.2 1341.8 146.2 1343.8 146.2 1347.8 146.2 1349.8 146.2 1351.8 146.2 1351.8 146.2 1351.8 145.2 1353.8 145.2 1353.8 145.2 1353.8 144.2 1357.8 144.2 1357.8 144.2 1357.8 143.7 1358.5 143.7 1358.5 143.7 1358.5 140.2 1358.8 140.2 1358.8 143.7 1358.8 143.7 1358.8 146.2 1360.8 146.2 1360.8 146.2 1360.8 131.2 1361.1 131.2 1361.1 146.2 1362.5 146.2 1362.5 146.2 1362.5 139.7 1362.8 139.7 1362.8 146.2 1365.8 146.2 1365.8 146.2 1365.8 138.2 1366.1 138.2 1366.1 146.2 1368.6 146.2 1371.6 146.2 1374.1 146.2 1379.1 146.2 1380.7 146.2 1380.7 146.2 1380.7 140.2 1381.0 140.2 1381.0 146.2 1381.0 146.2 1381.0 144.7 1383.0 144.7 1383.0 144.7 1383.0 146.2 1385.5 146.2 1387.5 146.2 1392.5 146.2 1395.5 146.2 1395.5 146.2 1395.5 145.2 1398.0 145.2 1398.0 145.2 1398.0 141.7 1398.3 141.7 1398.3 145.2 1398.3 145.2 1398.3 146.2 1402.3 146.2 1404.8 146.2 1407.3 146.2 1407.3 146.2 1407.3 144.2 1409.8 144.2 1409.8 144.2 1409.8 144.7 1411.8 144.7 1411.8 144.7 1411.8 146.2 1415.8 146.2 1417.4 146.2 1417.4 146.2 1417.4 146.4 1418.2 144.3 1420.5 144.3 1420.5 143.2 1422.4 143.2 1422.4 120.1 1423.2 120.1 1423.2 135.0 1425.0 135.0 1425.0 117.0 1427.2 117.0 1427.2 107.6 1428.5 107.6 1428.5 89.7 1430.5 89.7 1430.5 81.8 1431.4 81.8 1431.4 51.4 1432.7 51.4 1432.7 66.2 1434.4 66.2 1434.4 35.0 1437.1 35.0 1437.1 7.6 1438.9 7.6 1438.9 10.4 1439.9 10.4" fill="none" stroke="#f8f8f8" stroke-width="1.7" stroke-linejoin="miter"/><path d="M1497.5 27.6 1498.6 27.6 1498.6 29.5 1499.6 29.5 1499.6 45.1 1501.4 45.1 1501.4 56.1 1502.7 56.1 1502.7 59.5 1504.2 59.5 1504.2 76.4 1505.8 76.4 1505.8 80.3 1507.4 80.3 1507.4 94.3 1509.4 94.3 1509.4 107.6 1510.5 107.6 1510.5 120.9 1513.0 120.9 1513.0 114.7 1513.8 114.7 1513.8 127.9 1515.3 127.9 1515.3 142.0 1516.4 142.0 1516.4 146.4 1521.4 146.2 1523.6 146.2 1523.6 146.2 1523.6 144.2 1523.9 144.2 1523.9 146.2 1526.9 146.2 1530.9 146.2 1531.5 146.2 1531.5 146.2 1531.5 141.7 1531.8 141.7 1531.8 146.2 1533.8 146.2 1536.3 146.2 1539.3 146.2 1539.5 146.2 1539.5 146.2 1539.5 142.7 1539.8 142.7 1539.8 146.2 1542.3 146.2 1542.3 146.2 1542.3 144.2 1545.3 144.2 1545.3 144.2 1545.3 146.2 1545.5 146.2 1545.5 146.2 1545.5 146.4 1546.3 138.9 1548.0 138.9 1548.0 119.3 1548.6 119.3 1548.6 135.0 1551.1 135.0 1551.1 98.2 1552.5 98.2 1552.5 105.3 1554.2 105.3 1554.2 51.4 1556.1 51.4 1556.1 43.6 1556.8 43.6" fill="none" stroke="#f8f8f8" stroke-width="1.7" stroke-linejoin="miter"/><path d="M1675.5 19.8 1676.4 19.8 1676.4 34.2 1678.5 34.2 1678.5 49.8 1679.9 49.8 1679.9 52.2 1681.6 52.2 1681.6 67.0 1683.0 67.0 1683.0 69.3 1684.7 69.3 1684.7 84.2 1687.4 84.2 1687.4 95.1 1688.6 95.1 1688.6 113.9 1690.5 113.9 1690.5 127.9 1692.1 127.9 1692.1 129.5 1693.8 129.5 1693.8 146.4 1696.3 146.2 1698.8 146.2 1701.3 146.2 1701.3 146.2 1701.3 145.2 1706.3 145.2 1706.3 145.2 1706.3 146.2 1708.3 146.2 1709.0 146.2 1709.0 146.2 1709.0 143.2 1709.3 143.2 1709.3 146.2 1712.3 146.2 1714.3 146.2 1717.3 146.2 1721.3 146.2 1724.3 146.2 1726.8 146.2 1731.8 146.2 1733.0 146.2 1733.0 146.2 1733.0 142.2 1733.3 142.2 1733.3 146.2 1737.3 146.2 1739.3 146.2 1744.3 146.2 1747.3 146.2 1752.3 146.2 1754.8 146.2 1758.8 146.2 1761.8 146.2 1761.8 146.2 1761.8 144.7 1766.5 144.7 1766.5 144.7 1766.5 142.7 1766.8 142.7 1766.8 144.7 1766.8 144.7 1766.8 146.2 1770.8 146.2 1771.0 146.2 1771.0 146.2 1771.0 143.2 1771.3 143.2 1771.3 146.2 1773.8 146.2 1777.0 146.2 1777.0 146.2 1777.0 142.2 1777.3 142.2 1777.3 146.2 1779.8 146.2 1782.8 146.2 1782.8 146.2 1782.8 144.2 1786.8 144.2 1786.8 144.2 1786.8 146.2 1790.0 146.2 1790.0 146.2 1790.0 142.7 1790.3 142.7 1790.3 146.2 1792.3 146.2 1796.3 146.2 1800.3 146.2 1801.0 146.2 1801.0 146.2 1801.0 141.2 1801.3 141.2 1801.3 146.2 1804.3 146.2 1807.3 146.2 1807.3 146.2 1807.3 143.7 1809.0 143.7 1809.0 143.7 1809.0 139.2 1809.3 139.2 1809.3 143.7 1809.3 143.7 1809.3 146.2 1811.8 146.2 1816.0 146.2 1816.0 146.2 1816.0 142.2 1816.3 142.2 1816.3 146.2 1820.3 146.2 1824.0 146.2 1824.0 146.2 1824.0 143.2 1824.3 143.2 1824.3 146.2 1829.3 146.2 1829.3 146.2 1829.3 143.7 1834.0 143.7 1834.0 143.7 1834.0 142.2 1834.3 142.2 1834.3 143.7 1834.3 143.7 1834.3 146.2 1837.3 146.2 1842.0 146.2 1842.0 146.2" fill="none" stroke="#f8f8f8" stroke-width="1.7" stroke-linejoin="miter"/></svg>
<div class="a" style="left:52px;top:985.5px;width:1px;height:3.5px;background:#d0d0d0;"></div>
<div class="t" style="top:985.2px;left:39.8px;font-size:11px;color:#d4d4d4;letter-spacing:-0.43px;">12:28:30</div>
<div class="a" style="left:145px;top:985.5px;width:1px;height:3.5px;background:#d0d0d0;"></div>
<div class="t" style="top:985.2px;left:131.9px;font-size:11px;color:#d4d4d4;letter-spacing:-0.43px;">12:29:00</div>
<div class="a" style="left:237px;top:985.5px;width:1px;height:3.5px;background:#d0d0d0;"></div>
<div class="t" style="top:985.2px;left:224.0px;font-size:11px;color:#d4d4d4;letter-spacing:-0.43px;">12:29:30</div>
<div class="a" style="left:329px;top:985.5px;width:1px;height:3.5px;background:#d0d0d0;"></div>
<div class="t" style="top:985.2px;left:316.1px;font-size:11px;color:#d4d4d4;letter-spacing:-0.43px;">12:30:00</div>
<div class="a" style="left:421px;top:985.5px;width:1px;height:3.5px;background:#d0d0d0;"></div>
<div class="t" style="top:985.2px;left:408.2px;font-size:11px;color:#d4d4d4;letter-spacing:-0.43px;">12:30:30</div>
<div class="a" style="left:513px;top:985.5px;width:1px;height:3.5px;background:#d0d0d0;"></div>
<div class="t" style="top:985.2px;left:500.3px;font-size:11px;color:#d4d4d4;letter-spacing:-0.43px;">12:31:00</div>
<div class="a" style="left:605px;top:985.5px;width:1px;height:3.5px;background:#d0d0d0;"></div>
<div class="t" style="top:985.2px;left:592.4px;font-size:11px;color:#d4d4d4;letter-spacing:-0.43px;">12:31:30</div>
<div class="a" style="left:697px;top:985.5px;width:1px;height:3.5px;background:#d0d0d0;"></div>
<div class="t" style="top:985.2px;left:684.5px;font-size:11px;color:#d4d4d4;letter-spacing:-0.43px;">12:32:00</div>
<div class="a" style="left:789px;top:985.5px;width:1px;height:3.5px;background:#d0d0d0;"></div>
<div class="t" style="top:985.2px;left:776.6px;font-size:11px;color:#d4d4d4;letter-spacing:-0.43px;">12:32:30</div>
<div class="a" style="left:881px;top:985.5px;width:1px;height:3.5px;background:#d0d0d0;"></div>
<div class="t" style="top:985.2px;left:868.7px;font-size:11px;color:#d4d4d4;letter-spacing:-0.43px;">12:33:00</div>
<div class="a" style="left:974px;top:985.5px;width:1px;height:3.5px;background:#d0d0d0;"></div>
<div class="t" style="top:985.2px;left:960.8px;font-size:11px;color:#d4d4d4;letter-spacing:-0.43px;">12:33:30</div>
<div class="a" style="left:1066px;top:985.5px;width:1px;height:3.5px;background:#d0d0d0;"></div>
<div class="t" style="top:985.2px;left:1052.9px;font-size:11px;color:#d4d4d4;letter-spacing:-0.43px;">12:34:00</div>
<div class="a" style="left:1158px;top:985.5px;width:1px;height:3.5px;background:#d0d0d0;"></div>
<div class="t" style="top:985.2px;left:1145.0px;font-size:11px;color:#d4d4d4;letter-spacing:-0.43px;">12:34:30</div>
<div class="a" style="left:1250px;top:985.5px;width:1px;height:3.5px;background:#d0d0d0;"></div>
<div class="t" style="top:985.2px;left:1237.1px;font-size:11px;color:#d4d4d4;letter-spacing:-0.43px;">12:35:00</div>
<div class="a" style="left:1342px;top:985.5px;width:1px;height:3.5px;background:#d0d0d0;"></div>
<div class="t" style="top:985.2px;left:1329.2px;font-size:11px;color:#d4d4d4;letter-spacing:-0.43px;">12:35:30</div>
<div class="a" style="left:1434px;top:985.5px;width:1px;height:3.5px;background:#d0d0d0;"></div>
<div class="t" style="top:985.2px;left:1421.3px;font-size:11px;color:#d4d4d4;letter-spacing:-0.43px;">12:36:00</div>
<div class="a" style="left:1526px;top:985.5px;width:1px;height:3.5px;background:#d0d0d0;"></div>
<div class="t" style="top:985.2px;left:1513.4px;font-size:11px;color:#d4d4d4;letter-spacing:-0.43px;">12:36:30</div>
<div class="a" style="left:1618px;top:985.5px;width:1px;height:3.5px;background:#d0d0d0;"></div>
<div class="t" style="top:985.2px;left:1605.5px;font-size:11px;color:#d4d4d4;letter-spacing:-0.43px;">12:37:00</div>
<div class="a" style="left:1710px;top:985.5px;width:1px;height:3.5px;background:#d0d0d0;"></div>
<div class="t" style="top:985.2px;left:1697.6px;font-size:11px;color:#d4d4d4;letter-spacing:-0.43px;">12:37:30</div>
<div class="a" style="left:1802px;top:985.5px;width:1px;height:3.5px;background:#d0d0d0;"></div>
<div class="t" style="top:985.2px;left:1789.7px;font-size:11px;color:#d4d4d4;letter-spacing:-0.43px;">12:38:00</div>
<div class="t" style="top:793.4px;left:234.4px;font-size:11px;letter-spacing:-0.48px;">(160.20.144</div>
<div class="t" style="top:793.4px;left:315.6px;font-size:11px;letter-spacing:-0.14px;">hop 11</div>
<div class="a" style="left:2px;top:1005px;width:1891px;height:27px;background:#2d2d30;"></div>
<div class="a" style="left:2px;top:1032px;width:1917px;height:1px;background:#3c3c3e;"></div>
<div class="a" style="left:1px;top:1033px;width:1918px;height:5px;background:#1b1b1c;"></div>
<div class="a" style="left:37px;top:1017.7px;width:1818px;height:4px;background:#d2d2d2;border-top:1px solid #f0f0f0;border-radius:1px"></div>
<div class="a" style="left:1846px;top:1010.8px;width:17.6px;height:17.6px;background:#f6f6f6;border-radius:50%;"></div>
<div class="blob" style="left:81.9px;top:1.9px;width:31.2px;height:31.2px"></div>
<div class="blob" style="left:163.4px;top:78.4px;width:31.2px;height:31.2px"></div>
<div class="blob" style="left:274.4px;top:82.4px;width:31.2px;height:31.2px"></div>
<div class="blob" style="left:64.6px;top:115.7px;width:31.2px;height:31.2px"></div>
<div class="blob" style="left:154.0px;top:162.4px;width:31.2px;height:31.2px"></div>
<div class="blob" style="left:162.6px;top:203.4px;width:31.2px;height:31.2px"></div>
<div class="blob" style="left:157.3px;top:221.4px;width:31.2px;height:31.2px"></div>
<div class="blob" style="left:156.2px;top:247.6px;width:31.2px;height:31.2px"></div>
<div class="blob" style="left:162.6px;top:268.1px;width:31.2px;height:31.2px"></div>
<div class="blob" style="left:162.0px;top:297.6px;width:31.2px;height:31.2px"></div>
<div class="blob" style="left:163.5px;top:351.4px;width:31.2px;height:31.2px"></div>
<div class="blob" style="left:166.3px;top:371.1px;width:31.2px;height:31.2px"></div>
<div class="blob" style="left:164.4px;top:396.4px;width:31.2px;height:31.2px"></div>
<div class="blob" style="left:168.3px;top:421.9px;width:31.2px;height:31.2px"></div>
<div class="blob" style="left:167.1px;top:463.7px;width:31.2px;height:31.2px"></div>
<div class="blob" style="left:672.9px;top:166.1px;width:31.2px;height:31.2px"></div>
<div class="blob" style="left:672.9px;top:208.7px;width:31.2px;height:31.2px"></div>
<div class="blob" style="left:673.3px;top:230.4px;width:31.2px;height:31.2px"></div>
<div class="blob" style="left:674.0px;top:252.4px;width:31.2px;height:31.2px"></div>
<div class="blob" style="left:675.4px;top:274.4px;width:31.2px;height:31.2px"></div>
<div class="blob" style="left:677.7px;top:290.4px;width:31.2px;height:31.2px"></div>
<div class="blob" style="left:680.4px;top:305.1px;width:31.2px;height:31.2px"></div>
<div class="blob" style="left:675.7px;top:349.0px;width:31.2px;height:31.2px"></div>
<div class="blob" style="left:674.0px;top:370.4px;width:31.2px;height:31.2px"></div>
<div class="blob" style="left:675.7px;top:392.4px;width:31.2px;height:31.2px"></div>
<div class="blob" style="left:678.4px;top:416.1px;width:31.2px;height:31.2px"></div>
<div class="blob" style="left:684.7px;top:466.4px;width:31.2px;height:31.2px"></div>
<div class="blob" style="left:77.5px;top:567.9px;width:31.2px;height:31.2px"></div>
<div class="blob" style="left:284.4px;top:784.4px;width:31.2px;height:31.2px"></div>
</div></body></html>
